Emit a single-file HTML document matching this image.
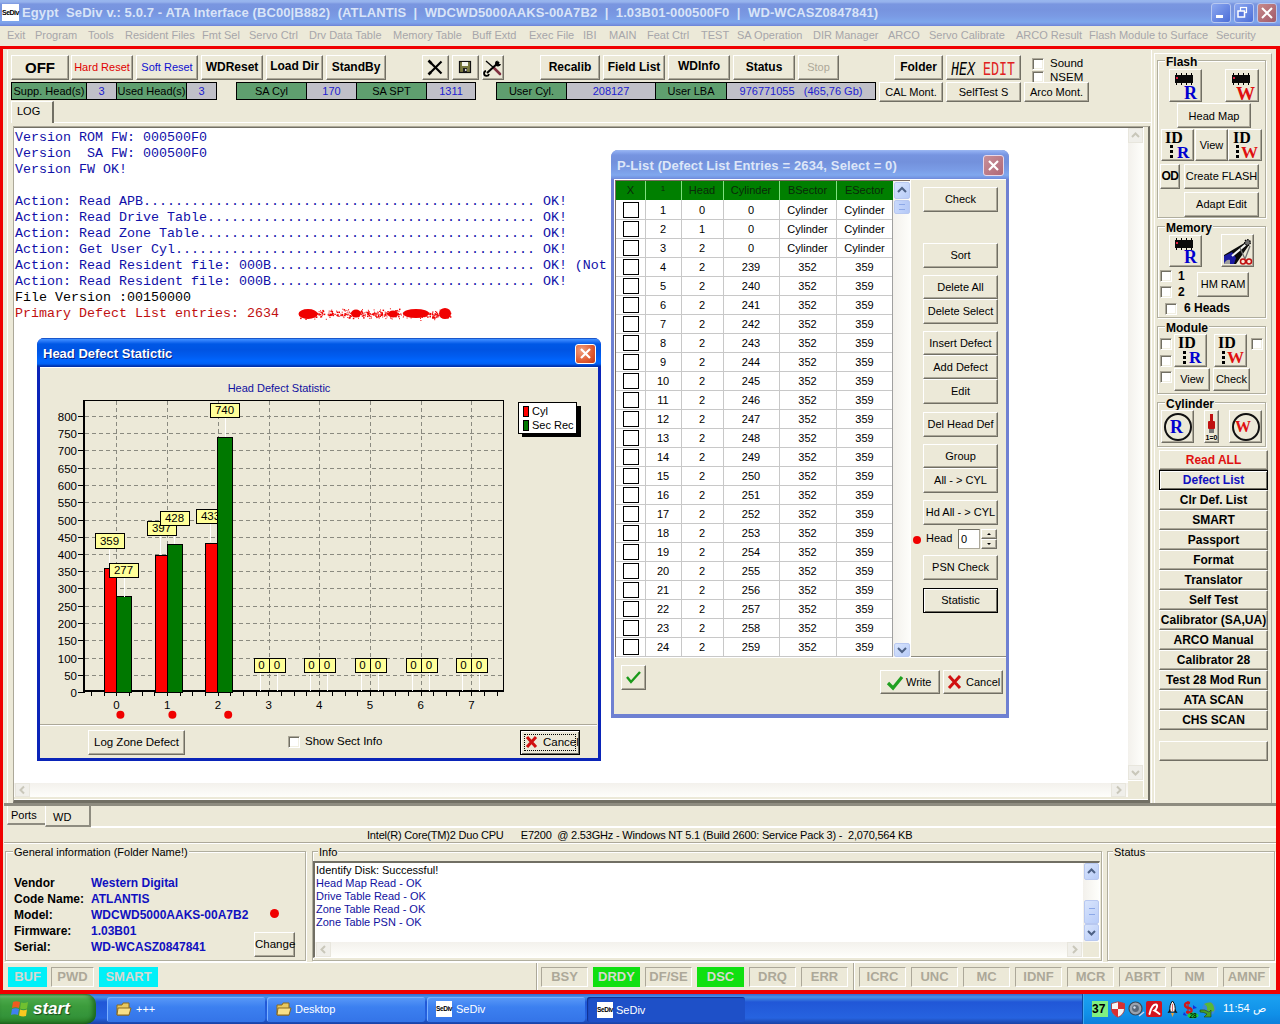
<!DOCTYPE html>
<html><head><meta charset="utf-8">
<style>
*{box-sizing:border-box;margin:0;padding:0}
html,body{width:1280px;height:1024px;overflow:hidden;background:#ECE9D8;font-family:"Liberation Sans",sans-serif;font-size:11px;color:#000}
.a{position:absolute}
.t{position:absolute;white-space:nowrap;line-height:1}
/* title bar */
#title{left:0;top:0;width:1280px;height:26px;background:linear-gradient(#98B6EE 0,#96B2EC 2px,#7A96E0 4px,#7794DF 10px,#7A9AE4 16px,#7EA6EC 22px,#7A98E4 24px,#6A82D6 26px)}
#title .tx{left:22px;top:6px;font-weight:bold;font-size:13px;color:#D8E4F8;letter-spacing:0.1px}
.cap{position:absolute;top:3px;width:20px;height:20px;border:1px solid #B8C8F0;border-radius:3px;background:linear-gradient(135deg,#8CA8F0,#4C6ED8)}
#menu{left:0;top:26px;width:1280px;height:20px;background:#ECE9D8}
#menu span{position:absolute;top:3px;color:#A7A6AA;font-size:11px;white-space:nowrap}
/* XP button */
.btn{position:absolute;background:#ECE9D8;border-style:solid;border-width:1px;border-color:#FFFFFF #716F64 #716F64 #FFFFFF;box-shadow:inset -1px -1px 0 #ACA899;text-align:center;white-space:nowrap}
.btn2{position:absolute;background:#ECE9D8;border-top:1px solid #fff;border-left:1px solid #fff;border-right:1px solid #ACA899;border-bottom:2px solid #ACA899;box-shadow:1px 1px 0 #716F64 inset,0 0 0 0;text-align:center;white-space:nowrap}
.g{position:absolute;background:#5F9F6F;border:1px solid #000;text-align:center;white-space:nowrap;color:#000;font-size:11px}
.v{position:absolute;background:#C0C0C8;border:1px solid #000;text-align:center;white-space:nowrap;color:#2020D0;font-size:11px}
.mono{font-family:"Liberation Mono",monospace;font-size:13.33px}
.chk{position:absolute;width:12px;height:12px;background:#fff;border:1px solid;border-color:#ACA899 #FFFFFF #FFFFFF #ACA899;box-shadow:inset 1px 1px 0 #716F64,inset -1px -1px 0 #F1EFE2}
</style></head><body>
<!-- title bar -->
<div id="title" class="a">
  <div class="a" style="left:2px;top:4px;width:17px;height:17px;background:#fff"></div>
  <div class="t" style="left:2px;top:9px;font-size:7px;font-weight:bold;color:#000;letter-spacing:-0.5px">SeDiv</div>
  <div class="t tx">Egypt&nbsp; SeDiv v.: 5.0.7 - ATA Interface (BC00|B882)&nbsp; (ATLANTIS&nbsp; |&nbsp; WDCWD5000AAKS-00A7B2&nbsp; |&nbsp; 1.03B01-000500F0&nbsp; |&nbsp; WD-WCASZ0847841)</div>
  <div class="cap" style="left:1211px"></div>
  <div class="a" style="left:1216px;top:15px;width:7px;height:3px;background:#fff"></div>
  <div class="cap" style="left:1234px"></div>
  <svg class="a" style="left:1234px;top:3px" width="20" height="20"><rect x="6.5" y="4.5" width="6" height="5" fill="none" stroke="#fff" stroke-width="1.2"/><rect x="4" y="8" width="6.5" height="6" fill="#5A7AE0" stroke="#fff" stroke-width="1.5"/></svg>
  <div class="cap" style="left:1257px;background:linear-gradient(135deg,#C88A8A,#A05A6A)"></div>
  <svg class="a" style="left:1257px;top:3px" width="20" height="20"><path d="M5 5 L15 15 M15 5 L5 15" stroke="#fff" stroke-width="2"/></svg>
</div>
<div id="menu" class="a">
<span style="left:7px">Exit</span><span style="left:35px">Program</span><span style="left:88px">Tools</span><span style="left:125px">Resident Files</span><span style="left:202px">Fmt Sel</span><span style="left:249px">Servo Ctrl</span><span style="left:309px">Drv Data Table</span><span style="left:393px">Memory Table</span><span style="left:472px">Buff Extd</span><span style="left:529px">Exec File</span><span style="left:583px">IBI</span><span style="left:609px">MAIN</span><span style="left:647px">Feat Ctrl</span><span style="left:701px">TEST</span><span style="left:737px">SA Operation</span><span style="left:813px">DIR Manager</span><span style="left:888px">ARCO</span><span style="left:929px">Servo Calibrate</span><span style="left:1016px">ARCO Result</span><span style="left:1089px">Flash Module to Surface</span><span style="left:1216px">Security</span>
</div>
<!-- red frame -->
<div class="a" style="left:0;top:46px;width:1280px;height:3px;background:#F00000"></div>
<div class="a" style="left:0;top:46px;width:3px;height:948px;background:#F00000"></div>
<div class="a" style="left:1276px;top:46px;width:4px;height:948px;background:#F00000"></div>
<div class="a" style="left:0;top:990px;width:1280px;height:4px;background:#F00000"></div>


<!-- main panel highlight -->
<div class="a" style="left:7px;top:50px;width:1px;height:760px;background:#FFFFFF"></div>
<!-- toolbar row 1 -->
<div class="btn" style="left:11px;top:55px;width:58px;height:25px;font-size:15px;font-weight:bold;line-height:23px">OFF</div>
<div class="btn" style="left:71px;top:55px;width:62px;height:25px;color:#E00000;font-size:11px;line-height:23px">Hard Reset</div>
<div class="btn" style="left:136px;top:55px;width:62px;height:25px;color:#1010D0;font-size:11px;line-height:23px">Soft Reset</div>
<div class="btn" style="left:201px;top:55px;width:62px;height:25px;font-size:12px;font-weight:bold;line-height:23px">WDReset</div>
<div class="btn" style="left:266px;top:55px;width:57px;height:25px;font-size:12px;font-weight:bold;line-height:21px">Load Dir</div>
<div class="btn" style="left:326px;top:55px;width:60px;height:25px;font-size:12px;font-weight:bold;line-height:23px">StandBy</div>
<div class="btn" style="left:422px;top:55px;width:27px;height:25px"></div>
<svg class="a" style="left:422px;top:55px" width="27" height="25"><path d="M7.5 6.5 L19.5 18.5" stroke="#000" stroke-width="2.2"/><path d="M19.5 6.5 L7.5 18.5" stroke="#000" stroke-width="2.2"/><path d="M6.5 5.5 L9.5 8.5 M6.5 19.5 L9 17" stroke="#000" stroke-width="2.6"/></svg>
<div class="btn" style="left:452px;top:55px;width:27px;height:25px"></div>
<svg class="a" style="left:452px;top:55px" width="27" height="25"><rect x="7.5" y="6.5" width="11" height="11" fill="#7A7A40" stroke="#111" stroke-width="1.2"/><rect x="10" y="7" width="6" height="4" fill="#F4F4EC"/><rect x="11" y="13" width="4" height="4" fill="#222"/><rect x="13" y="14" width="1.5" height="2" fill="#ddd"/></svg>
<div class="btn" style="left:482px;top:55px;width:22px;height:25px"></div>
<svg class="a" style="left:482px;top:55px" width="22" height="25"><path d="M4 6 L12 13" stroke="#000" stroke-width="1.3"/><path d="M12 13 L18 19" stroke="#803040" stroke-width="2.6" stroke-linecap="round"/><path d="M17 7 L5 18" stroke="#000" stroke-width="2"/><path d="M15.5 5.5 a3 3 0 1 0 3.5 3.5 L17.5 9 L16 7.5Z" fill="#000"/><path d="M4 16 a2.5 2.5 0 1 0 3 3" stroke="#000" stroke-width="1.8" fill="none"/></svg>
<div class="btn" style="left:540px;top:55px;width:60px;height:25px;font-size:12px;font-weight:bold;line-height:23px">Recalib</div>
<div class="btn" style="left:603px;top:55px;width:62px;height:25px;font-size:12px;font-weight:bold;line-height:23px">Field List</div>
<div class="btn" style="left:668px;top:55px;width:62px;height:25px;font-size:12px;font-weight:bold;line-height:21px">WDInfo</div>
<div class="btn" style="left:733px;top:55px;width:62px;height:25px;font-size:12px;font-weight:bold;line-height:23px">Status</div>
<div class="btn" style="left:798px;top:55px;width:41px;height:25px;font-size:11px;color:#ACA899;line-height:23px">Stop</div>
<div class="btn" style="left:894px;top:55px;width:49px;height:25px;font-size:12px;font-weight:bold;line-height:23px">Folder</div>
<div class="btn" style="left:946px;top:55px;width:75px;height:25px"></div>
<div class="t" style="left:951px;top:60px;font-size:13.33px;font-family:'Liberation Mono',monospace;transform:scaleY(1.45);transform-origin:0 0;line-height:1"><span style="font-style:italic">HEX</span> <span style="color:#E02020">EDIT</span></div>
<div class="chk" style="left:1032px;top:58px"></div>
<div class="chk" style="left:1032px;top:71px"></div>
<div class="t" style="left:1050px;top:58px;font-size:11.5px">Sound</div>
<div class="t" style="left:1050px;top:72px;font-size:11.5px">NSEM</div>
<!-- row 2 -->
<div class="g" style="left:11px;top:82px;width:76px;height:18px;line-height:16px">Supp. Head(s)</div>
<div class="v" style="left:86px;top:82px;width:31px;height:18px;line-height:16px">3</div>
<div class="g" style="left:116px;top:82px;width:71px;height:18px;line-height:16px">Used Head(s)</div>
<div class="v" style="left:186px;top:82px;width:31px;height:18px;line-height:16px">3</div>
<div class="g" style="left:236px;top:82px;width:71px;height:18px;line-height:16px">SA Cyl</div>
<div class="v" style="left:306px;top:82px;width:51px;height:18px;line-height:16px">170</div>
<div class="g" style="left:356px;top:82px;width:71px;height:18px;line-height:16px">SA SPT</div>
<div class="v" style="left:426px;top:82px;width:50px;height:18px;line-height:16px">1311</div>
<div class="g" style="left:496px;top:82px;width:71px;height:18px;line-height:16px">User Cyl.</div>
<div class="v" style="left:566px;top:82px;width:90px;height:18px;line-height:16px">208127</div>
<div class="g" style="left:655px;top:82px;width:72px;height:18px;line-height:16px">User LBA</div>
<div class="v" style="left:726px;top:82px;width:150px;height:18px;line-height:16px">976771055&nbsp;&nbsp; (465,76 Gb)</div>
<div class="btn" style="left:879px;top:82px;width:64px;height:20px;font-size:11px;line-height:18px">CAL Mont.</div>
<div class="btn" style="left:946px;top:82px;width:75px;height:20px;font-size:11px;line-height:18px">SelfTest S</div>
<div class="btn" style="left:1024px;top:82px;width:65px;height:20px;font-size:11px;line-height:18px">Arco Mont.</div>
<!-- LOG tab -->
<div class="a" style="left:11px;top:101px;width:43px;height:22px;border-top:1px solid #fff;border-left:1px solid #fff;border-right:2px solid #716F64;background:#ECE9D8"></div>
<div class="t" style="left:17px;top:106px;font-size:11px">LOG</div>
<div class="a" style="left:54px;top:122px;width:1097px;height:1px;background:#fff"></div>


<!-- LOG panel -->
<div class="a" style="left:13px;top:126px;width:1137px;height:677px;border-top:1px solid #ACA899;border-left:1px solid #ACA899;border-right:2px solid #716F64;border-bottom:3px solid #716F64;background:#fff"></div>
<div class="a" style="left:14px;top:127px;width:1134px;height:1px;background:#716F64"></div>
<div class="a" style="left:1143px;top:127px;width:5px;height:673px;background:#ECE9D8;border-left:1px solid #fff"></div>
<div class="a" style="left:14px;top:797px;width:1134px;height:3px;background:#ECE9D8;border-bottom:1px solid #fff"></div>
<!-- v scroll -->
<div class="a" style="left:1128px;top:128px;width:15px;height:652px;background:linear-gradient(90deg,#F3F1EC,#FEFEFB)"></div>
<div class="a" style="left:1128px;top:128px;width:15px;height:15px;background:#F0EFEA;border:1px solid #E8E6DD"></div>
<div class="a" style="left:1128px;top:765px;width:15px;height:15px;background:#F0EFEA;border:1px solid #E8E6DD"></div>
<svg class="a" style="left:1128px;top:128px" width="15" height="15"><path d="M4 9 L7.5 5.5 L11 9" stroke="#C9C7BA" stroke-width="2" fill="none"/></svg>
<svg class="a" style="left:1128px;top:765px" width="15" height="15"><path d="M4 6 L7.5 9.5 L11 6" stroke="#C9C7BA" stroke-width="2" fill="none"/></svg>
<!-- h scroll -->
<div class="a" style="left:14px;top:783px;width:1114px;height:14px;background:linear-gradient(#F3F1EC,#FEFEFB)"></div>
<div class="a" style="left:15px;top:783px;width:15px;height:14px;background:#F0EFEA;border:1px solid #E8E6DD"></div>
<div class="a" style="left:1111px;top:783px;width:15px;height:14px;background:#F0EFEA;border:1px solid #E8E6DD"></div>
<svg class="a" style="left:15px;top:783px" width="15" height="14"><path d="M9 3.5 L5.5 7 L9 10.5" stroke="#C9C7BA" stroke-width="2" fill="none"/></svg>
<svg class="a" style="left:1111px;top:783px" width="15" height="14"><path d="M6 3.5 L9.5 7 L6 10.5" stroke="#C9C7BA" stroke-width="2" fill="none"/></svg>
<div class="a" style="left:1128px;top:781px;width:15px;height:16px;background:#ECE9D8"></div>
<div class="a mono" style="left:15px;top:130px;line-height:16px;white-space:nowrap"><div style="color:#1010A8;height:16px">Version&nbsp;ROM&nbsp;FW:&nbsp;000500F0</div><div style="color:#1010A8;height:16px">Version&nbsp;&nbsp;SA&nbsp;FW:&nbsp;000500F0</div><div style="color:#1010A8;height:16px">Version&nbsp;FW&nbsp;OK!</div><div style="color:#1010A8;height:16px">&nbsp;</div><div style="color:#1010A8;height:16px">Action:&nbsp;Read&nbsp;APB.................................................&nbsp;OK!</div><div style="color:#1010A8;height:16px">Action:&nbsp;Read&nbsp;Drive&nbsp;Table.........................................&nbsp;OK!</div><div style="color:#1010A8;height:16px">Action:&nbsp;Read&nbsp;Zone&nbsp;Table..........................................&nbsp;OK!</div><div style="color:#1010A8;height:16px">Action:&nbsp;Get&nbsp;User&nbsp;Cyl.............................................&nbsp;OK!</div><div style="color:#1010A8;height:16px">Action:&nbsp;Read&nbsp;Resident&nbsp;file:&nbsp;000B.................................&nbsp;OK!&nbsp;(Not</div><div style="color:#1010A8;height:16px">Action:&nbsp;Read&nbsp;Resident&nbsp;file:&nbsp;000B.................................&nbsp;OK!</div><div style="color:#000000;height:16px">File&nbsp;Version&nbsp;:00150000</div><div style="color:#C01010;height:16px">Primary&nbsp;Defect&nbsp;List&nbsp;entries:&nbsp;2634</div></div>
<svg class="a" style="left:298px;top:304px" width="160" height="20"><ellipse cx="10" cy="10" rx="9.5" ry="5" fill="#F00000"/><ellipse cx="58" cy="9.5" rx="5" ry="4" fill="#F00000"/><ellipse cx="95" cy="10" rx="5" ry="3.5" fill="#F00000"/><ellipse cx="118" cy="9.5" rx="13" ry="4.5" fill="#F00000"/><ellipse cx="147" cy="9.5" rx="6" ry="5.5" fill="#F00000"/><rect x="69.9" y="5.8" width="1" height="1" fill="#F00000"/><rect x="69.8" y="8.3" width="1.5" height="1.5" fill="#F00000"/><rect x="30.5" y="10.8" width="1.5" height="1.5" fill="#F00000"/><rect x="120.9" y="7.9" width="1" height="1" fill="#F00000"/><rect x="69.0" y="11.6" width="1.5" height="1.5" fill="#F00000"/><rect x="97.2" y="11.9" width="1.5" height="1.5" fill="#F00000"/><rect x="149.3" y="12.8" width="1.5" height="1.5" fill="#F00000"/><rect x="99.5" y="9.4" width="1.5" height="1.5" fill="#F00000"/><rect x="4.3" y="9.3" width="1" height="1" fill="#F00000"/><rect x="133.9" y="9.9" width="1.5" height="1.5" fill="#F00000"/><rect x="6.5" y="7.9" width="1" height="1" fill="#F00000"/><rect x="79.9" y="10.5" width="1.5" height="1.5" fill="#F00000"/><rect x="46.1" y="10.8" width="1.5" height="1.5" fill="#F00000"/><rect x="43.7" y="10.0" width="1.5" height="1.5" fill="#F00000"/><rect x="151.4" y="11.7" width="1" height="1" fill="#F00000"/><rect x="115.7" y="7.4" width="1.5" height="1.5" fill="#F00000"/><rect x="45.4" y="13.1" width="1" height="1" fill="#F00000"/><rect x="18.2" y="11.5" width="1" height="1" fill="#F00000"/><rect x="60.0" y="13.7" width="1" height="1" fill="#F00000"/><rect x="34.0" y="9.0" width="1" height="1" fill="#F00000"/><rect x="72.5" y="12.0" width="1" height="1" fill="#F00000"/><rect x="86.9" y="9.8" width="1" height="1" fill="#F00000"/><rect x="118.8" y="9.9" width="1" height="1" fill="#F00000"/><rect x="4.3" y="10.8" width="1" height="1" fill="#F00000"/><rect x="115.7" y="11.1" width="1" height="1" fill="#F00000"/><rect x="3.6" y="11.0" width="1" height="1" fill="#F00000"/><rect x="121.6" y="11.1" width="1" height="1" fill="#F00000"/><rect x="78.3" y="12.3" width="1.5" height="1.5" fill="#F00000"/><rect x="117.4" y="8.3" width="1" height="1" fill="#F00000"/><rect x="65.1" y="11.0" width="1" height="1" fill="#F00000"/><rect x="2.1" y="13.6" width="1.5" height="1.5" fill="#F00000"/><rect x="47.6" y="5.9" width="1" height="1" fill="#F00000"/><rect x="33.6" y="6.9" width="1.5" height="1.5" fill="#F00000"/><rect x="88.5" y="12.4" width="1" height="1" fill="#F00000"/><rect x="150.4" y="10.4" width="1.5" height="1.5" fill="#F00000"/><rect x="51.3" y="11.5" width="1" height="1" fill="#F00000"/><rect x="59.9" y="11.2" width="1.5" height="1.5" fill="#F00000"/><rect x="38.5" y="10.6" width="1.5" height="1.5" fill="#F00000"/><rect x="57.3" y="9.2" width="1.5" height="1.5" fill="#F00000"/><rect x="74.6" y="9.3" width="1.5" height="1.5" fill="#F00000"/><rect x="22.4" y="7.9" width="1" height="1" fill="#F00000"/><rect x="138.3" y="11.8" width="1.5" height="1.5" fill="#F00000"/><rect x="39.4" y="11.2" width="1.5" height="1.5" fill="#F00000"/><rect x="31.5" y="13.0" width="1" height="1" fill="#F00000"/><rect x="134.3" y="8.3" width="1" height="1" fill="#F00000"/><rect x="18.4" y="8.7" width="1.5" height="1.5" fill="#F00000"/><rect x="146.4" y="10.2" width="1" height="1" fill="#F00000"/><rect x="65.1" y="13.1" width="1.5" height="1.5" fill="#F00000"/><rect x="75.6" y="5.4" width="1" height="1" fill="#F00000"/><rect x="21.0" y="9.4" width="1" height="1" fill="#F00000"/><rect x="85.9" y="11.7" width="1" height="1" fill="#F00000"/><rect x="33.9" y="7.8" width="1" height="1" fill="#F00000"/><rect x="114.3" y="11.9" width="1" height="1" fill="#F00000"/><rect x="11.1" y="10.9" width="1" height="1" fill="#F00000"/><rect x="44.3" y="4.7" width="1" height="1" fill="#F00000"/><rect x="56.3" y="9.0" width="1" height="1" fill="#F00000"/><rect x="149.1" y="8.3" width="1.5" height="1.5" fill="#F00000"/><rect x="144.0" y="7.4" width="1.5" height="1.5" fill="#F00000"/><rect x="7.3" y="14.4" width="1.5" height="1.5" fill="#F00000"/><rect x="48.8" y="10.5" width="1" height="1" fill="#F00000"/><rect x="5.2" y="8.5" width="1.5" height="1.5" fill="#F00000"/><rect x="48.7" y="8.3" width="1" height="1" fill="#F00000"/><rect x="151.9" y="12.2" width="1.5" height="1.5" fill="#F00000"/><rect x="8.7" y="11.1" width="1.5" height="1.5" fill="#F00000"/><rect x="112.6" y="13.5" width="1" height="1" fill="#F00000"/><rect x="54.8" y="13.7" width="1.5" height="1.5" fill="#F00000"/><rect x="73.0" y="13.5" width="1" height="1" fill="#F00000"/><rect x="131.5" y="11.9" width="1.5" height="1.5" fill="#F00000"/><rect x="4.2" y="9.0" width="1" height="1" fill="#F00000"/><rect x="93.3" y="8.3" width="1" height="1" fill="#F00000"/><rect x="15.6" y="11.2" width="1" height="1" fill="#F00000"/><rect x="111.2" y="11.0" width="1" height="1" fill="#F00000"/><rect x="142.1" y="9.2" width="1" height="1" fill="#F00000"/><rect x="127.8" y="7.9" width="1" height="1" fill="#F00000"/><rect x="79.8" y="8.3" width="1" height="1" fill="#F00000"/><rect x="74.1" y="9.8" width="1" height="1" fill="#F00000"/><rect x="145.6" y="12.6" width="1.5" height="1.5" fill="#F00000"/><rect x="140.1" y="12.3" width="1" height="1" fill="#F00000"/><rect x="136.5" y="9.2" width="1.5" height="1.5" fill="#F00000"/><rect x="32.4" y="10.8" width="1" height="1" fill="#F00000"/><rect x="115.1" y="7.5" width="1" height="1" fill="#F00000"/><rect x="135.8" y="13.9" width="1" height="1" fill="#F00000"/><rect x="62.7" y="10.0" width="1" height="1" fill="#F00000"/><rect x="134.0" y="12.8" width="1" height="1" fill="#F00000"/><rect x="34.9" y="11.2" width="1" height="1" fill="#F00000"/><rect x="76.5" y="9.3" width="1" height="1" fill="#F00000"/><rect x="108.7" y="11.5" width="1" height="1" fill="#F00000"/><rect x="18.9" y="9.5" width="1" height="1" fill="#F00000"/><rect x="43.3" y="10.5" width="1.5" height="1.5" fill="#F00000"/><rect x="80.0" y="12.0" width="1.5" height="1.5" fill="#F00000"/><rect x="49.3" y="13.0" width="1" height="1" fill="#F00000"/><rect x="50.1" y="5.2" width="1" height="1" fill="#F00000"/><rect x="43.7" y="7.7" width="1" height="1" fill="#F00000"/><rect x="87.6" y="8.1" width="1" height="1" fill="#F00000"/><rect x="99.4" y="7.4" width="1" height="1" fill="#F00000"/><rect x="70.2" y="8.9" width="1" height="1" fill="#F00000"/><rect x="117.4" y="9.6" width="1" height="1" fill="#F00000"/><rect x="149.6" y="13.5" width="1" height="1" fill="#F00000"/><rect x="69.0" y="8.0" width="1" height="1" fill="#F00000"/><rect x="145.8" y="7.9" width="1.5" height="1.5" fill="#F00000"/><rect x="31.7" y="10.7" width="1.5" height="1.5" fill="#F00000"/><rect x="3.6" y="8.6" width="1" height="1" fill="#F00000"/><rect x="82.2" y="11.4" width="1" height="1" fill="#F00000"/><rect x="83.0" y="10.3" width="1.5" height="1.5" fill="#F00000"/><rect x="77.1" y="11.2" width="1.5" height="1.5" fill="#F00000"/><rect x="137.9" y="10.0" width="1" height="1" fill="#F00000"/><rect x="63.6" y="11.5" width="1" height="1" fill="#F00000"/><rect x="70.0" y="8.8" width="1.5" height="1.5" fill="#F00000"/><rect x="135.1" y="12.5" width="1.5" height="1.5" fill="#F00000"/><rect x="133.9" y="10.1" width="1" height="1" fill="#F00000"/><rect x="71.6" y="9.2" width="1.5" height="1.5" fill="#F00000"/><rect x="131.9" y="8.9" width="1.5" height="1.5" fill="#F00000"/><rect x="140.6" y="11.1" width="1" height="1" fill="#F00000"/><rect x="149.1" y="11.0" width="1" height="1" fill="#F00000"/><rect x="82.5" y="10.4" width="1.5" height="1.5" fill="#F00000"/><rect x="130.4" y="8.3" width="1" height="1" fill="#F00000"/><rect x="77.7" y="11.8" width="1" height="1" fill="#F00000"/><rect x="117.2" y="10.4" width="1" height="1" fill="#F00000"/><rect x="140.0" y="10.8" width="1" height="1" fill="#F00000"/><rect x="122.0" y="13.9" width="1" height="1" fill="#F00000"/><rect x="82.0" y="8.3" width="1" height="1" fill="#F00000"/><rect x="24.3" y="5.9" width="1.5" height="1.5" fill="#F00000"/><rect x="137.1" y="7.0" width="1" height="1" fill="#F00000"/><rect x="143.9" y="9.7" width="1" height="1" fill="#F00000"/><rect x="88.8" y="8.7" width="1" height="1" fill="#F00000"/><rect x="81.0" y="6.9" width="1" height="1" fill="#F00000"/><rect x="126.7" y="8.9" width="1.5" height="1.5" fill="#F00000"/><rect x="128.5" y="9.5" width="1.5" height="1.5" fill="#F00000"/><rect x="40.5" y="7.6" width="1.5" height="1.5" fill="#F00000"/><rect x="33.2" y="5.6" width="1" height="1" fill="#F00000"/><rect x="147.3" y="7.4" width="1" height="1" fill="#F00000"/><rect x="63.7" y="9.6" width="1" height="1" fill="#F00000"/><rect x="77.5" y="9.6" width="1" height="1" fill="#F00000"/><rect x="79.4" y="9.7" width="1" height="1" fill="#F00000"/><rect x="83.6" y="11.0" width="1" height="1" fill="#F00000"/><rect x="105.6" y="9.9" width="1" height="1" fill="#F00000"/><rect x="141.6" y="5.6" width="1" height="1" fill="#F00000"/><rect x="42.4" y="11.1" width="1" height="1" fill="#F00000"/><rect x="76.0" y="7.7" width="1" height="1" fill="#F00000"/><rect x="80.7" y="13.6" width="1" height="1" fill="#F00000"/><rect x="30.7" y="6.6" width="1" height="1" fill="#F00000"/><rect x="107.3" y="6.9" width="1" height="1" fill="#F00000"/><rect x="7.3" y="10.2" width="1" height="1" fill="#F00000"/><rect x="50.3" y="10.3" width="1" height="1" fill="#F00000"/><rect x="38.7" y="7.6" width="1.5" height="1.5" fill="#F00000"/><rect x="20.4" y="10.0" width="1.5" height="1.5" fill="#F00000"/><rect x="95.5" y="9.4" width="1" height="1" fill="#F00000"/><rect x="5.5" y="7.0" width="1.5" height="1.5" fill="#F00000"/><rect x="64.0" y="8.8" width="1" height="1" fill="#F00000"/><rect x="131.6" y="9.8" width="1.5" height="1.5" fill="#F00000"/><rect x="97.8" y="6.2" width="1.5" height="1.5" fill="#F00000"/><rect x="90.0" y="9.3" width="1" height="1" fill="#F00000"/><rect x="36.9" y="9.8" width="1" height="1" fill="#F00000"/><rect x="49.4" y="6.4" width="1" height="1" fill="#F00000"/><rect x="135.6" y="11.2" width="1" height="1" fill="#F00000"/><rect x="135.1" y="13.3" width="1" height="1" fill="#F00000"/><rect x="135.3" y="10.6" width="1" height="1" fill="#F00000"/><rect x="16.6" y="10.6" width="1" height="1" fill="#F00000"/><rect x="83.5" y="9.6" width="1.5" height="1.5" fill="#F00000"/><rect x="104.8" y="8.7" width="1" height="1" fill="#F00000"/><rect x="16.4" y="8.3" width="1" height="1" fill="#F00000"/><rect x="19.3" y="9.2" width="1.5" height="1.5" fill="#F00000"/><rect x="97.2" y="6.0" width="1" height="1" fill="#F00000"/><rect x="122.4" y="16.0" width="1" height="1" fill="#F00000"/><rect x="17.9" y="12.5" width="1.5" height="1.5" fill="#F00000"/><rect x="137.8" y="10.6" width="1" height="1" fill="#F00000"/><rect x="24.0" y="10.5" width="1" height="1" fill="#F00000"/><rect x="150.5" y="11.2" width="1.5" height="1.5" fill="#F00000"/><rect x="16.3" y="14.6" width="1" height="1" fill="#F00000"/><rect x="13.6" y="11.9" width="1" height="1" fill="#F00000"/><rect x="51.0" y="7.6" width="1" height="1" fill="#F00000"/><rect x="33.5" y="10.5" width="1" height="1" fill="#F00000"/><rect x="4.0" y="8.8" width="1" height="1" fill="#F00000"/><rect x="63.2" y="6.3" width="1" height="1" fill="#F00000"/><rect x="112.9" y="8.9" width="1" height="1" fill="#F00000"/><rect x="16.2" y="10.7" width="1" height="1" fill="#F00000"/><rect x="50.6" y="13.3" width="1.5" height="1.5" fill="#F00000"/><rect x="142.9" y="12.0" width="1.5" height="1.5" fill="#F00000"/><rect x="91.9" y="4.3" width="1" height="1" fill="#F00000"/><rect x="43.9" y="9.8" width="1" height="1" fill="#F00000"/><rect x="113.7" y="10.6" width="1" height="1" fill="#F00000"/><rect x="22.0" y="6.4" width="1" height="1" fill="#F00000"/><rect x="134.0" y="8.8" width="1" height="1" fill="#F00000"/><rect x="62.9" y="6.8" width="1.5" height="1.5" fill="#F00000"/><rect x="29.7" y="10.5" width="1" height="1" fill="#F00000"/><rect x="3.6" y="8.4" width="1" height="1" fill="#F00000"/><rect x="150.6" y="10.5" width="1" height="1" fill="#F00000"/><rect x="143.7" y="9.6" width="1.5" height="1.5" fill="#F00000"/><rect x="46.8" y="10.4" width="1" height="1" fill="#F00000"/><rect x="82.0" y="12.0" width="1" height="1" fill="#F00000"/><rect x="79.2" y="8.6" width="1" height="1" fill="#F00000"/><rect x="116.3" y="10.0" width="1.5" height="1.5" fill="#F00000"/><rect x="5.4" y="7.5" width="1" height="1" fill="#F00000"/><rect x="68.5" y="7.8" width="1.5" height="1.5" fill="#F00000"/><rect x="9.6" y="10.7" width="1" height="1" fill="#F00000"/><rect x="40.8" y="11.8" width="1" height="1" fill="#F00000"/><rect x="137.8" y="7.7" width="1.5" height="1.5" fill="#F00000"/><rect x="87.2" y="9.3" width="1" height="1" fill="#F00000"/><rect x="97.7" y="10.3" width="1.5" height="1.5" fill="#F00000"/><rect x="102.3" y="9.3" width="1" height="1" fill="#F00000"/><rect x="60.0" y="11.8" width="1" height="1" fill="#F00000"/><rect x="130.4" y="9.3" width="1.5" height="1.5" fill="#F00000"/><rect x="93.7" y="14.5" width="1" height="1" fill="#F00000"/><rect x="44.7" y="11.7" width="1" height="1" fill="#F00000"/><rect x="91.7" y="8.9" width="1.5" height="1.5" fill="#F00000"/><rect x="42.5" y="11.2" width="1" height="1" fill="#F00000"/><rect x="101.5" y="10.0" width="1" height="1" fill="#F00000"/><rect x="89.9" y="9.5" width="1.5" height="1.5" fill="#F00000"/><rect x="25.5" y="10.1" width="1" height="1" fill="#F00000"/><rect x="114.3" y="8.0" width="1" height="1" fill="#F00000"/><rect x="89.3" y="9.7" width="1" height="1" fill="#F00000"/><rect x="66.4" y="8.3" width="1" height="1" fill="#F00000"/><rect x="39.6" y="10.0" width="1" height="1" fill="#F00000"/><rect x="142.6" y="9.4" width="1.5" height="1.5" fill="#F00000"/><rect x="138.4" y="13.1" width="1" height="1" fill="#F00000"/><rect x="92.5" y="14.0" width="1" height="1" fill="#F00000"/><rect x="9.6" y="9.1" width="1" height="1" fill="#F00000"/><rect x="55.5" y="10.5" width="1" height="1" fill="#F00000"/><rect x="20.6" y="7.2" width="1" height="1" fill="#F00000"/><rect x="92.2" y="11.0" width="1.5" height="1.5" fill="#F00000"/><rect x="89.3" y="7.0" width="1.5" height="1.5" fill="#F00000"/><rect x="124.3" y="11.7" width="1" height="1" fill="#F00000"/><rect x="144.9" y="9.9" width="1" height="1" fill="#F00000"/><rect x="77.4" y="8.5" width="1" height="1" fill="#F00000"/><rect x="119.6" y="8.7" width="1" height="1" fill="#F00000"/><rect x="93.5" y="8.7" width="1.5" height="1.5" fill="#F00000"/><rect x="86.7" y="7.6" width="1" height="1" fill="#F00000"/><rect x="30.5" y="8.5" width="1" height="1" fill="#F00000"/><rect x="77.3" y="9.2" width="1.5" height="1.5" fill="#F00000"/><rect x="7.9" y="8.9" width="1" height="1" fill="#F00000"/><rect x="3.4" y="10.0" width="1" height="1" fill="#F00000"/><rect x="17.4" y="10.5" width="1.5" height="1.5" fill="#F00000"/><rect x="43.7" y="10.2" width="1" height="1" fill="#F00000"/><rect x="84.6" y="5.6" width="1.5" height="1.5" fill="#F00000"/><rect x="149.2" y="8.1" width="1" height="1" fill="#F00000"/><rect x="53.6" y="10.2" width="1.5" height="1.5" fill="#F00000"/><rect x="22.0" y="12.5" width="1" height="1" fill="#F00000"/><rect x="123.4" y="7.4" width="1.5" height="1.5" fill="#F00000"/><rect x="127.7" y="10.3" width="1.5" height="1.5" fill="#F00000"/><rect x="40.7" y="7.8" width="1" height="1" fill="#F00000"/><rect x="57.3" y="6.6" width="1" height="1" fill="#F00000"/><rect x="45.6" y="5.1" width="1.5" height="1.5" fill="#F00000"/><rect x="125.9" y="11.2" width="1.5" height="1.5" fill="#F00000"/><rect x="16.6" y="12.7" width="1" height="1" fill="#F00000"/><rect x="13.8" y="12.2" width="1" height="1" fill="#F00000"/><rect x="124.3" y="11.3" width="1" height="1" fill="#F00000"/><rect x="46.8" y="10.1" width="1" height="1" fill="#F00000"/><rect x="138.6" y="9.2" width="1.5" height="1.5" fill="#F00000"/><rect x="14.3" y="8.9" width="1.5" height="1.5" fill="#F00000"/><rect x="51.2" y="13.0" width="1" height="1" fill="#F00000"/><rect x="34.8" y="9.0" width="1" height="1" fill="#F00000"/><rect x="50.4" y="8.5" width="1" height="1" fill="#F00000"/><rect x="87.4" y="14.1" width="1" height="1" fill="#F00000"/><rect x="67.7" y="7.7" width="1" height="1" fill="#F00000"/><rect x="70.7" y="10.9" width="1.5" height="1.5" fill="#F00000"/><rect x="136.2" y="15.2" width="1" height="1" fill="#F00000"/><rect x="14.6" y="10.2" width="1.5" height="1.5" fill="#F00000"/><rect x="61.3" y="9.6" width="1" height="1" fill="#F00000"/><rect x="121.4" y="9.9" width="1" height="1" fill="#F00000"/><rect x="83.1" y="8.1" width="1.5" height="1.5" fill="#F00000"/><rect x="86.4" y="11.5" width="1" height="1" fill="#F00000"/><rect x="123.8" y="13.0" width="1" height="1" fill="#F00000"/><rect x="79.3" y="7.5" width="1" height="1" fill="#F00000"/><rect x="99.7" y="9.3" width="1" height="1" fill="#F00000"/><rect x="11.6" y="6.6" width="1" height="1" fill="#F00000"/><rect x="52.2" y="9.0" width="1" height="1" fill="#F00000"/><rect x="112.6" y="10.7" width="1.5" height="1.5" fill="#F00000"/><rect x="100.0" y="9.5" width="1" height="1" fill="#F00000"/><rect x="113.9" y="9.1" width="1" height="1" fill="#F00000"/><rect x="75.4" y="8.8" width="1.5" height="1.5" fill="#F00000"/><rect x="52.7" y="8.2" width="1" height="1" fill="#F00000"/><rect x="102.9" y="10.5" width="1" height="1" fill="#F00000"/><rect x="75.2" y="10.3" width="1.5" height="1.5" fill="#F00000"/><rect x="139.2" y="9.3" width="1" height="1" fill="#F00000"/><rect x="115.6" y="11.8" width="1" height="1" fill="#F00000"/><rect x="122.9" y="9.8" width="1" height="1" fill="#F00000"/><rect x="135.3" y="12.8" width="1.5" height="1.5" fill="#F00000"/><rect x="56.3" y="9.3" width="1" height="1" fill="#F00000"/><rect x="122.3" y="8.2" width="1" height="1" fill="#F00000"/><rect x="38.9" y="11.0" width="1" height="1" fill="#F00000"/><rect x="150.7" y="9.1" width="1" height="1" fill="#F00000"/><rect x="60.4" y="10.9" width="1.5" height="1.5" fill="#F00000"/><rect x="45.8" y="10.7" width="1" height="1" fill="#F00000"/><rect x="111.6" y="9.9" width="1" height="1" fill="#F00000"/><rect x="99.2" y="10.2" width="1" height="1" fill="#F00000"/><rect x="115.0" y="8.8" width="1" height="1" fill="#F00000"/><rect x="89.6" y="10.5" width="1" height="1" fill="#F00000"/><rect x="31.6" y="9.7" width="1" height="1" fill="#F00000"/><rect x="34.6" y="10.3" width="1.5" height="1.5" fill="#F00000"/><rect x="78.3" y="13.2" width="1" height="1" fill="#F00000"/><rect x="29.7" y="9.8" width="1" height="1" fill="#F00000"/><rect x="96.0" y="11.2" width="1.5" height="1.5" fill="#F00000"/><rect x="73.9" y="9.7" width="1" height="1" fill="#F00000"/><rect x="101.0" y="14.2" width="1" height="1" fill="#F00000"/><rect x="74.4" y="10.1" width="1" height="1" fill="#F00000"/><rect x="122.2" y="10.6" width="1" height="1" fill="#F00000"/><rect x="148.4" y="11.0" width="1" height="1" fill="#F00000"/><rect x="100.6" y="6.7" width="1" height="1" fill="#F00000"/><rect x="135.8" y="13.1" width="1" height="1" fill="#F00000"/><rect x="121.5" y="6.9" width="1.5" height="1.5" fill="#F00000"/><rect x="65.2" y="11.5" width="1" height="1" fill="#F00000"/><rect x="23.7" y="8.5" width="1.5" height="1.5" fill="#F00000"/><rect x="21.7" y="9.9" width="1.5" height="1.5" fill="#F00000"/><rect x="82.2" y="7.2" width="1" height="1" fill="#F00000"/><rect x="87.8" y="10.6" width="1" height="1" fill="#F00000"/><rect x="125.3" y="11.2" width="1" height="1" fill="#F00000"/><rect x="54.8" y="8.2" width="1" height="1" fill="#F00000"/><rect x="106.1" y="8.4" width="1" height="1" fill="#F00000"/><rect x="145.3" y="6.6" width="1" height="1" fill="#F00000"/><rect x="4.9" y="8.0" width="1" height="1" fill="#F00000"/><rect x="64.5" y="10.8" width="1" height="1" fill="#F00000"/><rect x="33.3" y="9.6" width="1.5" height="1.5" fill="#F00000"/><rect x="64.0" y="5.2" width="1" height="1" fill="#F00000"/><rect x="49.4" y="10.2" width="1" height="1" fill="#F00000"/><rect x="13.4" y="9.2" width="1.5" height="1.5" fill="#F00000"/><rect x="12.1" y="12.1" width="1" height="1" fill="#F00000"/><rect x="105.1" y="11.6" width="1" height="1" fill="#F00000"/><rect x="114.0" y="11.2" width="1" height="1" fill="#F00000"/><rect x="100.1" y="11.9" width="1.5" height="1.5" fill="#F00000"/><rect x="73.3" y="10.2" width="1" height="1" fill="#F00000"/><rect x="86.6" y="9.7" width="1.5" height="1.5" fill="#F00000"/><rect x="33.0" y="10.1" width="1.5" height="1.5" fill="#F00000"/><rect x="24.8" y="6.7" width="1.5" height="1.5" fill="#F00000"/><rect x="46.7" y="6.6" width="1" height="1" fill="#F00000"/><rect x="115.2" y="9.2" width="1" height="1" fill="#F00000"/><rect x="32.0" y="9.7" width="1.5" height="1.5" fill="#F00000"/><rect x="18.4" y="9.4" width="1" height="1" fill="#F00000"/><rect x="110.6" y="11.5" width="1" height="1" fill="#F00000"/><rect x="69.0" y="9.3" width="1.5" height="1.5" fill="#F00000"/><rect x="16.2" y="10.6" width="1.5" height="1.5" fill="#F00000"/><rect x="96.6" y="10.6" width="1" height="1" fill="#F00000"/><rect x="127.5" y="11.2" width="1.5" height="1.5" fill="#F00000"/><rect x="107.6" y="10.4" width="1" height="1" fill="#F00000"/><rect x="67.1" y="10.3" width="1" height="1" fill="#F00000"/><rect x="53.2" y="12.0" width="1" height="1" fill="#F00000"/><rect x="99.1" y="5.9" width="1" height="1" fill="#F00000"/><rect x="125.2" y="8.6" width="1" height="1" fill="#F00000"/><rect x="95.5" y="11.2" width="1.5" height="1.5" fill="#F00000"/><rect x="62.1" y="8.2" width="1" height="1" fill="#F00000"/><rect x="101.0" y="4.6" width="1.5" height="1.5" fill="#F00000"/><rect x="81.5" y="9.9" width="1" height="1" fill="#F00000"/><rect x="99.6" y="11.3" width="1" height="1" fill="#F00000"/><rect x="85.6" y="10.5" width="1" height="1" fill="#F00000"/><rect x="125.8" y="11.7" width="1.5" height="1.5" fill="#F00000"/><rect x="109.0" y="9.9" width="1" height="1" fill="#F00000"/><rect x="84.2" y="12.5" width="1" height="1" fill="#F00000"/><rect x="93.8" y="7.4" width="1" height="1" fill="#F00000"/><rect x="150.0" y="9.8" width="1.5" height="1.5" fill="#F00000"/><rect x="151.8" y="8.7" width="1.5" height="1.5" fill="#F00000"/><rect x="143.7" y="5.5" width="1.5" height="1.5" fill="#F00000"/><rect x="100.9" y="10.2" width="1" height="1" fill="#F00000"/><rect x="88.5" y="8.9" width="1.5" height="1.5" fill="#F00000"/><rect x="52.0" y="13.4" width="1" height="1" fill="#F00000"/><rect x="71.5" y="12.2" width="1" height="1" fill="#F00000"/><rect x="69.8" y="9.8" width="1.5" height="1.5" fill="#F00000"/><rect x="83.5" y="8.5" width="1.5" height="1.5" fill="#F00000"/><rect x="11.5" y="11.0" width="1.5" height="1.5" fill="#F00000"/><rect x="150.8" y="9.4" width="1" height="1" fill="#F00000"/><rect x="92.2" y="12.7" width="1" height="1" fill="#F00000"/><rect x="104.8" y="12.6" width="1" height="1" fill="#F00000"/><rect x="38.1" y="6.6" width="1" height="1" fill="#F00000"/><rect x="91.6" y="8.3" width="1" height="1" fill="#F00000"/><rect x="70.2" y="7.1" width="1.5" height="1.5" fill="#F00000"/><rect x="22.7" y="12.0" width="1.5" height="1.5" fill="#F00000"/><rect x="129.1" y="12.3" width="1.5" height="1.5" fill="#F00000"/><rect x="122.6" y="8.5" width="1" height="1" fill="#F00000"/><rect x="25.8" y="9.6" width="1.5" height="1.5" fill="#F00000"/><rect x="60.0" y="10.3" width="1.5" height="1.5" fill="#F00000"/><rect x="62.9" y="9.5" width="1" height="1" fill="#F00000"/><rect x="87.2" y="10.9" width="1" height="1" fill="#F00000"/><rect x="10.0" y="10.7" width="1" height="1" fill="#F00000"/><rect x="62.5" y="6.9" width="1" height="1" fill="#F00000"/><rect x="92.0" y="8.0" width="1.5" height="1.5" fill="#F00000"/><rect x="139.0" y="10.4" width="1.5" height="1.5" fill="#F00000"/><rect x="115.7" y="10.0" width="1" height="1" fill="#F00000"/><rect x="127.7" y="7.7" width="1.5" height="1.5" fill="#F00000"/><rect x="63.4" y="7.6" width="1.5" height="1.5" fill="#F00000"/><rect x="51.6" y="11.0" width="1.5" height="1.5" fill="#F00000"/><rect x="66.8" y="11.5" width="1" height="1" fill="#F00000"/><rect x="46.4" y="9.0" width="1.5" height="1.5" fill="#F00000"/><rect x="137.0" y="9.7" width="1" height="1" fill="#F00000"/><rect x="134.4" y="7.3" width="1" height="1" fill="#F00000"/><rect x="38.7" y="10.8" width="1" height="1" fill="#F00000"/><rect x="147.9" y="8.8" width="1" height="1" fill="#F00000"/><rect x="106.2" y="8.5" width="1" height="1" fill="#F00000"/><rect x="100.5" y="9.8" width="1" height="1" fill="#F00000"/><rect x="134.0" y="13.2" width="1.5" height="1.5" fill="#F00000"/><rect x="57.3" y="10.0" width="1.5" height="1.5" fill="#F00000"/><rect x="65.2" y="10.5" width="1.5" height="1.5" fill="#F00000"/><rect x="65.2" y="8.7" width="1" height="1" fill="#F00000"/><rect x="137.5" y="12.9" width="1" height="1" fill="#F00000"/><rect x="134.3" y="12.1" width="1.5" height="1.5" fill="#F00000"/><rect x="144.6" y="11.5" width="1" height="1" fill="#F00000"/><rect x="5.6" y="10.0" width="1" height="1" fill="#F00000"/><rect x="11.4" y="12.9" width="1" height="1" fill="#F00000"/><rect x="23.2" y="7.7" width="1.5" height="1.5" fill="#F00000"/><rect x="89.8" y="10.5" width="1" height="1" fill="#F00000"/><rect x="48.2" y="10.1" width="1" height="1" fill="#F00000"/><rect x="23.5" y="10.6" width="1" height="1" fill="#F00000"/><rect x="32.4" y="6.6" width="1.5" height="1.5" fill="#F00000"/><rect x="136.5" y="11.3" width="1" height="1" fill="#F00000"/><rect x="136.9" y="13.6" width="1" height="1" fill="#F00000"/><rect x="27.8" y="14.8" width="1" height="1" fill="#F00000"/><rect x="82.0" y="5.5" width="1" height="1" fill="#F00000"/><rect x="30.7" y="10.5" width="1" height="1" fill="#F00000"/><rect x="47.9" y="9.6" width="1" height="1" fill="#F00000"/><rect x="146.2" y="9.7" width="1" height="1" fill="#F00000"/><rect x="52.2" y="12.1" width="1" height="1" fill="#F00000"/><rect x="64.3" y="11.9" width="1" height="1" fill="#F00000"/><rect x="108.6" y="13.5" width="1" height="1" fill="#F00000"/><rect x="42.3" y="9.6" width="1" height="1" fill="#F00000"/><rect x="120.6" y="7.7" width="1" height="1" fill="#F00000"/><rect x="122.6" y="9.0" width="1.5" height="1.5" fill="#F00000"/><rect x="36.3" y="9.8" width="1" height="1" fill="#F00000"/><rect x="136.3" y="10.6" width="1" height="1" fill="#F00000"/><rect x="98.0" y="11.3" width="1" height="1" fill="#F00000"/><rect x="71.4" y="14.0" width="1" height="1" fill="#F00000"/><rect x="81.6" y="12.1" width="1" height="1" fill="#F00000"/><rect x="3.0" y="7.9" width="1" height="1" fill="#F00000"/><rect x="122.5" y="8.7" width="1" height="1" fill="#F00000"/></svg>



<!-- right panel -->
<div class="a" style="left:1151px;top:50px;width:1px;height:756px;background:#fff"></div>
<div class="a" style="left:1154px;top:53px;width:118px;height:753px;border-top:1px solid #fff;border-left:1px solid #fff;border-right:1px solid #ACA899"></div>
<div class="a" style="left:1151px;top:803px;width:125px;height:3px;background:#8E8C80"></div>
<div class="a" style="left:1157px;top:60px;width:109px;height:158px;border:1px solid #B0AE9E;box-shadow:inset 1px 1px 0 #fff,1px 1px 0 #fff"></div><div class="t" style="left:1165px;top:56px;padding:0 1px;background:#ECE9D8;font-weight:bold;font-size:12px">Flash</div>
<div class="btn" style="left:1169px;top:69px;width:33px;height:33px"></div>
<div class="a" style="left:1175px;top:75px;width:18px;height:8px;background:#0A0A0A"></div><div class="a" style="left:1176px;top:77px;width:2px;height:2px;background:#E02040"></div><div class="a" style="left:1176px;top:73px;width:1px;height:2px;background:#000"></div><div class="a" style="left:1176px;top:83px;width:1px;height:2px;background:#000"></div><div class="a" style="left:1181px;top:73px;width:1px;height:2px;background:#000"></div><div class="a" style="left:1181px;top:83px;width:1px;height:2px;background:#000"></div><div class="a" style="left:1186px;top:73px;width:1px;height:2px;background:#000"></div><div class="a" style="left:1186px;top:83px;width:1px;height:2px;background:#000"></div><div class="a" style="left:1191px;top:73px;width:1px;height:2px;background:#000"></div><div class="a" style="left:1191px;top:83px;width:1px;height:2px;background:#000"></div>
<div class="t" style="left:1184px;top:84px;font-family:'Liberation Serif',serif;font-weight:bold;font-size:18px;color:#0000D0">R</div>
<div class="btn" style="left:1225px;top:69px;width:34px;height:33px"></div>
<div class="a" style="left:1232px;top:75px;width:18px;height:8px;background:#0A0A0A"></div><div class="a" style="left:1233px;top:77px;width:2px;height:2px;background:#E02040"></div><div class="a" style="left:1233px;top:73px;width:1px;height:2px;background:#000"></div><div class="a" style="left:1233px;top:83px;width:1px;height:2px;background:#000"></div><div class="a" style="left:1238px;top:73px;width:1px;height:2px;background:#000"></div><div class="a" style="left:1238px;top:83px;width:1px;height:2px;background:#000"></div><div class="a" style="left:1243px;top:73px;width:1px;height:2px;background:#000"></div><div class="a" style="left:1243px;top:83px;width:1px;height:2px;background:#000"></div><div class="a" style="left:1248px;top:73px;width:1px;height:2px;background:#000"></div><div class="a" style="left:1248px;top:83px;width:1px;height:2px;background:#000"></div>
<div class="t" style="left:1236px;top:84px;font-family:'Liberation Serif',serif;font-weight:bold;font-size:19px;color:#E01010">W</div>
<div class="btn" style="left:1177px;top:103px;width:74px;height:25px;font-size:11px;line-height:25px">Head Map</div>
<div class="btn" style="left:1161px;top:129px;width:33px;height:32px"></div>
<div class="t" style="left:1165px;top:130px;font-family:'Liberation Serif',serif;font-weight:bold;font-size:16px;color:#000">ID</div><div class="a" style="left:1170px;top:145px;width:3px;height:3px;background:#000"></div><div class="a" style="left:1170px;top:150px;width:3px;height:3px;background:#000"></div><div class="a" style="left:1170px;top:155px;width:3px;height:3px;background:#000"></div><div class="t" style="left:1177px;top:144px;font-family:'Liberation Serif',serif;font-weight:bold;font-size:17px;color:#0000D0">R</div>
<div class="btn" style="left:1195px;top:129px;width:33px;height:32px;font-size:11px;line-height:30px">View</div>
<div class="btn" style="left:1228px;top:129px;width:34px;height:32px"></div>
<div class="t" style="left:1233px;top:130px;font-family:'Liberation Serif',serif;font-weight:bold;font-size:16px;color:#000">ID</div><div class="a" style="left:1236px;top:145px;width:3px;height:3px;background:#000"></div><div class="a" style="left:1236px;top:150px;width:3px;height:3px;background:#000"></div><div class="a" style="left:1236px;top:155px;width:3px;height:3px;background:#000"></div><div class="t" style="left:1241px;top:144px;font-family:'Liberation Serif',serif;font-weight:bold;font-size:17px;color:#E01010">W</div>
<div class="btn" style="left:1160px;top:164px;width:20px;height:25px;font-size:12px;font-weight:bold;line-height:23px;letter-spacing:-0.5px">OD</div>
<div class="btn" style="left:1184px;top:164px;width:75px;height:25px;font-size:11px;line-height:23px">Create FLASH</div>
<div class="btn" style="left:1184px;top:192px;width:75px;height:25px;font-size:11px;line-height:23px">Adapt Edit</div>
<div class="a" style="left:1157px;top:226px;width:109px;height:92px;border:1px solid #B0AE9E;box-shadow:inset 1px 1px 0 #fff,1px 1px 0 #fff"></div><div class="t" style="left:1165px;top:222px;padding:0 1px;background:#ECE9D8;font-weight:bold;font-size:12px">Memory</div>
<div class="btn" style="left:1169px;top:235px;width:33px;height:32px"></div>
<div class="a" style="left:1175px;top:240px;width:18px;height:8px;background:#0A0A0A"></div><div class="a" style="left:1176px;top:242px;width:2px;height:2px;background:#E02040"></div><div class="a" style="left:1176px;top:238px;width:1px;height:2px;background:#000"></div><div class="a" style="left:1176px;top:248px;width:1px;height:2px;background:#000"></div><div class="a" style="left:1181px;top:238px;width:1px;height:2px;background:#000"></div><div class="a" style="left:1181px;top:248px;width:1px;height:2px;background:#000"></div><div class="a" style="left:1186px;top:238px;width:1px;height:2px;background:#000"></div><div class="a" style="left:1186px;top:248px;width:1px;height:2px;background:#000"></div><div class="a" style="left:1191px;top:238px;width:1px;height:2px;background:#000"></div><div class="a" style="left:1191px;top:248px;width:1px;height:2px;background:#000"></div>
<div class="t" style="left:1184px;top:248px;font-family:'Liberation Serif',serif;font-weight:bold;font-size:18px;color:#0000D0">R</div>
<div class="btn" style="left:1221px;top:234px;width:33px;height:33px"></div>
<svg class="a" style="left:1221px;top:234px" width="33" height="33"><path d="M3 30 L3 21 L25 8 L28 11 L15 30 Z" fill="#0A0A0A"/><path d="M3 30 L3 22 L11 18 L15 24 L13 30 Z" fill="#1A1AA0"/><path d="M11 22 L26 9.5" stroke="#F4F4F0" stroke-width="2.2"/><circle cx="26.5" cy="8.5" r="2.8" fill="#707070" stroke="#000" stroke-width="1.3" stroke-dasharray="1.5 1"/><path d="M3 30 a5 5 0 0 1 6 -4 L9 30Z" fill="#A0A0A0"/><path d="M19 14 L24 25 M29 12 L24 25" stroke="#707070" stroke-width="1.3" fill="none"/><circle cx="22" cy="27.5" r="2.5" fill="#F8E8D8" stroke="#C01010" stroke-width="1.5"/><circle cx="28" cy="27.5" r="2.5" fill="#F8E8D8" stroke="#C01010" stroke-width="1.5"/></svg>
<div class="chk" style="left:1160px;top:270px"></div>
<div class="t" style="left:1178px;top:270px;font-size:12px;font-weight:bold">1</div>
<div class="chk" style="left:1160px;top:286px"></div>
<div class="t" style="left:1178px;top:286px;font-size:12px;font-weight:bold">2</div>
<div class="btn" style="left:1197px;top:272px;width:52px;height:25px;font-size:11px;line-height:23px">HM RAM</div>
<div class="chk" style="left:1165px;top:303px"></div>
<div class="t" style="left:1184px;top:302px;font-size:12px;font-weight:bold">6 Heads</div>
<div class="a" style="left:1157px;top:326px;width:109px;height:68px;border:1px solid #B0AE9E;box-shadow:inset 1px 1px 0 #fff,1px 1px 0 #fff"></div><div class="t" style="left:1165px;top:322px;padding:0 1px;background:#ECE9D8;font-weight:bold;font-size:12px">Module</div>
<div class="chk" style="left:1160px;top:338px"></div>
<div class="chk" style="left:1160px;top:355px"></div>
<div class="chk" style="left:1160px;top:371px"></div>
<div class="chk" style="left:1251px;top:338px"></div>
<div class="btn" style="left:1174px;top:334px;width:33px;height:33px"></div>
<div class="t" style="left:1178px;top:335px;font-family:'Liberation Serif',serif;font-weight:bold;font-size:16px;color:#000">ID</div><div class="a" style="left:1183px;top:351px;width:3px;height:3px;background:#000"></div><div class="a" style="left:1183px;top:356px;width:3px;height:3px;background:#000"></div><div class="a" style="left:1183px;top:361px;width:3px;height:3px;background:#000"></div><div class="t" style="left:1189px;top:349px;font-family:'Liberation Serif',serif;font-weight:bold;font-size:17px;color:#0000D0">R</div>
<div class="btn" style="left:1214px;top:334px;width:33px;height:33px"></div>
<div class="t" style="left:1218px;top:335px;font-family:'Liberation Serif',serif;font-weight:bold;font-size:16px;color:#000">ID</div><div class="a" style="left:1222px;top:351px;width:3px;height:3px;background:#000"></div><div class="a" style="left:1222px;top:356px;width:3px;height:3px;background:#000"></div><div class="a" style="left:1222px;top:361px;width:3px;height:3px;background:#000"></div><div class="t" style="left:1227px;top:349px;font-family:'Liberation Serif',serif;font-weight:bold;font-size:17px;color:#E01010">W</div>
<div class="btn" style="left:1174px;top:368px;width:36px;height:23px;font-size:11px;line-height:21px">View</div>
<div class="btn" style="left:1213px;top:368px;width:37px;height:23px;font-size:11px;line-height:21px">Check</div>
<div class="a" style="left:1157px;top:402px;width:109px;height:45px;border:1px solid #B0AE9E;box-shadow:inset 1px 1px 0 #fff,1px 1px 0 #fff"></div><div class="t" style="left:1165px;top:398px;padding:0 1px;background:#ECE9D8;font-weight:bold;font-size:12px">Cylinder</div>
<div class="btn" style="left:1161px;top:410px;width:33px;height:33px"></div>
<div class="a" style="left:1164px;top:413px;width:28px;height:28px;border:2.5px solid #111;border-radius:50%"></div>
<div class="t" style="left:1170px;top:418px;font-family:'Liberation Serif',serif;font-weight:bold;font-size:18px;color:#0000D0">R</div>
<div class="btn" style="left:1204px;top:410px;width:15px;height:33px"></div>
<svg class="a" style="left:1204px;top:410px" width="15" height="33"><rect x="6" y="4" width="3" height="8" fill="#C01010"/><rect x="4" y="11" width="7" height="8" rx="1" fill="#C01010"/><rect x="5" y="19" width="5" height="4" fill="#777"/><text x="7.5" y="30" font-size="7" text-anchor="middle" font-family="Liberation Sans" font-weight="bold" fill="#000">1=0</text></svg>
<div class="btn" style="left:1229px;top:410px;width:33px;height:33px"></div>
<div class="a" style="left:1232px;top:413px;width:28px;height:28px;border:2.5px solid #111;border-radius:50%"></div>
<div class="t" style="left:1235px;top:419px;font-family:'Liberation Serif',serif;font-weight:bold;font-size:16px;color:#E01010">W</div>
<div class="btn" style="left:1159px;top:450px;width:109px;height:20px;font-size:12px;font-weight:bold;line-height:18px;color:#E01010">Read ALL</div>
<div class="btn" style="left:1159px;top:470px;width:109px;height:20px;font-size:12px;font-weight:bold;line-height:18px;color:#1010C0;border:1px solid #000;box-shadow:inset 1px 1px 0 #fff,inset -1px -1px 0 #716F64">Defect List</div>
<div class="btn" style="left:1159px;top:490px;width:109px;height:20px;font-size:12px;font-weight:bold;line-height:18px;color:#000">Clr Def. List</div>
<div class="btn" style="left:1159px;top:510px;width:109px;height:20px;font-size:12px;font-weight:bold;line-height:18px;color:#000">SMART</div>
<div class="btn" style="left:1159px;top:530px;width:109px;height:20px;font-size:12px;font-weight:bold;line-height:18px;color:#000">Passport</div>
<div class="btn" style="left:1159px;top:550px;width:109px;height:20px;font-size:12px;font-weight:bold;line-height:18px;color:#000">Format</div>
<div class="btn" style="left:1159px;top:570px;width:109px;height:20px;font-size:12px;font-weight:bold;line-height:18px;color:#000">Translator</div>
<div class="btn" style="left:1159px;top:590px;width:109px;height:20px;font-size:12px;font-weight:bold;line-height:18px;color:#000">Self Test</div>
<div class="btn" style="left:1159px;top:610px;width:109px;height:20px;font-size:12px;font-weight:bold;line-height:18px;color:#000">Calibrator (SA,UA)</div>
<div class="btn" style="left:1159px;top:630px;width:109px;height:20px;font-size:12px;font-weight:bold;line-height:18px;color:#000">ARCO Manual</div>
<div class="btn" style="left:1159px;top:650px;width:109px;height:20px;font-size:12px;font-weight:bold;line-height:18px;color:#000">Calibrator 28</div>
<div class="btn" style="left:1159px;top:670px;width:109px;height:20px;font-size:12px;font-weight:bold;line-height:18px;color:#000">Test 28 Mod Run</div>
<div class="btn" style="left:1159px;top:690px;width:109px;height:20px;font-size:12px;font-weight:bold;line-height:18px;color:#000">ATA SCAN</div>
<div class="btn" style="left:1159px;top:710px;width:109px;height:20px;font-size:12px;font-weight:bold;line-height:18px;color:#000">CHS SCAN</div>
<div class="btn" style="left:1159px;top:741px;width:109px;height:20px"></div>
<!-- P-List dialog -->
<div class="a" style="left:611px;top:150px;width:398px;height:568px;background:#6E80D2;border-radius:7px 7px 0 0"></div>
<div class="a" style="left:611px;top:150px;width:398px;height:29px;border-radius:7px 7px 0 0;background:linear-gradient(#9CB8F2 0,#8AA8EE 2px,#7694E0 5px,#7391DC 12px,#7A9CE6 20px,#80A8EE 25px,#7494E2 28px,#6E88D8 29px)"></div>
<div class="a" style="left:614px;top:179px;width:392px;height:535px;background:#ECE9D8;border-top:1px solid #fff"></div>
<div class="t" style="left:617px;top:159px;font-size:13px;font-weight:bold;color:#DDE6F8;letter-spacing:0.13px">P-List (Defect List Entries = 2634, Select = 0)</div>
<div class="a" style="left:983px;top:155px;width:21px;height:21px;border:1px solid #E8D8E8;border-radius:3px;background:linear-gradient(135deg,#C89098,#B06878)"></div>
<svg class="a" style="left:983px;top:155px" width="21" height="21"><path d="M6 6 L15 15 M15 6 L6 15" stroke="#fff" stroke-width="2.2"/></svg>
<!-- grid frame -->
<div class="a" style="left:614px;top:179px;width:300px;height:480px;border-top:1px solid #fff;border-left:1px solid #fff"></div>
<div class="a" style="left:615px;top:180px;width:297px;height:478px;border-top:1px solid #7A6A60;border-left:1px solid #7A6A60"></div>
<div class="a" style="left:616px;top:181px;width:277px;height:19px;background:#007F00"></div>
<div class="a" style="left:645px;top:181px;width:1px;height:19px;background:#7FE07F"></div>
<div class="a" style="left:681px;top:181px;width:1px;height:19px;background:#7FE07F"></div>
<div class="a" style="left:723px;top:181px;width:1px;height:19px;background:#7FE07F"></div>
<div class="a" style="left:779px;top:181px;width:1px;height:19px;background:#7FE07F"></div>
<div class="a" style="left:836px;top:181px;width:1px;height:19px;background:#7FE07F"></div>
<div class="t" style="left:616px;top:185px;width:29px;text-align:center;font-size:11px;color:#0A2A0A">X</div>
<div class="t" style="left:645px;top:185px;width:36px;text-align:center;font-size:11px;color:#0A2A0A"><span style="font-size:8px;position:relative;top:-3px">1</span></div>
<div class="t" style="left:681px;top:185px;width:42px;text-align:center;font-size:11px;color:#0A2A0A">Head</div>
<div class="t" style="left:723px;top:185px;width:56px;text-align:center;font-size:11px;color:#0A2A0A">Cylinder</div>
<div class="t" style="left:779px;top:185px;width:57px;text-align:center;font-size:11px;color:#0A2A0A">BSector</div>
<div class="t" style="left:836px;top:185px;width:57px;text-align:center;font-size:11px;color:#0A2A0A">ESector</div>
<div class="a" style="left:616px;top:200px;width:277px;height:457px;background:#fff"></div>
<div class="a" style="left:616px;top:219px;width:277px;height:1px;background:#C8C8C8"></div>
<div class="a" style="left:616px;top:238px;width:277px;height:1px;background:#C8C8C8"></div>
<div class="a" style="left:616px;top:257px;width:277px;height:1px;background:#C8C8C8"></div>
<div class="a" style="left:616px;top:276px;width:277px;height:1px;background:#C8C8C8"></div>
<div class="a" style="left:616px;top:295px;width:277px;height:1px;background:#C8C8C8"></div>
<div class="a" style="left:616px;top:314px;width:277px;height:1px;background:#C8C8C8"></div>
<div class="a" style="left:616px;top:333px;width:277px;height:1px;background:#C8C8C8"></div>
<div class="a" style="left:616px;top:352px;width:277px;height:1px;background:#C8C8C8"></div>
<div class="a" style="left:616px;top:371px;width:277px;height:1px;background:#C8C8C8"></div>
<div class="a" style="left:616px;top:390px;width:277px;height:1px;background:#C8C8C8"></div>
<div class="a" style="left:616px;top:409px;width:277px;height:1px;background:#C8C8C8"></div>
<div class="a" style="left:616px;top:428px;width:277px;height:1px;background:#C8C8C8"></div>
<div class="a" style="left:616px;top:447px;width:277px;height:1px;background:#C8C8C8"></div>
<div class="a" style="left:616px;top:466px;width:277px;height:1px;background:#C8C8C8"></div>
<div class="a" style="left:616px;top:485px;width:277px;height:1px;background:#C8C8C8"></div>
<div class="a" style="left:616px;top:504px;width:277px;height:1px;background:#C8C8C8"></div>
<div class="a" style="left:616px;top:523px;width:277px;height:1px;background:#C8C8C8"></div>
<div class="a" style="left:616px;top:542px;width:277px;height:1px;background:#C8C8C8"></div>
<div class="a" style="left:616px;top:561px;width:277px;height:1px;background:#C8C8C8"></div>
<div class="a" style="left:616px;top:580px;width:277px;height:1px;background:#C8C8C8"></div>
<div class="a" style="left:616px;top:599px;width:277px;height:1px;background:#C8C8C8"></div>
<div class="a" style="left:616px;top:618px;width:277px;height:1px;background:#C8C8C8"></div>
<div class="a" style="left:616px;top:637px;width:277px;height:1px;background:#C8C8C8"></div>
<div class="a" style="left:616px;top:656px;width:277px;height:1px;background:#C8C8C8"></div>
<div class="a" style="left:645px;top:200px;width:1px;height:457px;background:#C8C8C8"></div>
<div class="a" style="left:681px;top:200px;width:1px;height:457px;background:#C8C8C8"></div>
<div class="a" style="left:723px;top:200px;width:1px;height:457px;background:#C8C8C8"></div>
<div class="a" style="left:779px;top:200px;width:1px;height:457px;background:#C8C8C8"></div>
<div class="a" style="left:836px;top:200px;width:1px;height:457px;background:#C8C8C8"></div>
<div class="a" style="left:623px;top:202px;width:16px;height:16px;border:1.5px solid #000;background:#fff"></div>
<div class="t" style="left:645px;top:205px;width:36px;text-align:center;font-size:11px">1</div>
<div class="t" style="left:681px;top:205px;width:42px;text-align:center;font-size:11px">0</div>
<div class="t" style="left:723px;top:205px;width:56px;text-align:center;font-size:11px">0</div>
<div class="t" style="left:779px;top:205px;width:57px;text-align:center;font-size:11px">Cylinder</div>
<div class="t" style="left:836px;top:205px;width:57px;text-align:center;font-size:11px">Cylinder</div>
<div class="a" style="left:623px;top:221px;width:16px;height:16px;border:1.5px solid #000;background:#fff"></div>
<div class="t" style="left:645px;top:224px;width:36px;text-align:center;font-size:11px">2</div>
<div class="t" style="left:681px;top:224px;width:42px;text-align:center;font-size:11px">1</div>
<div class="t" style="left:723px;top:224px;width:56px;text-align:center;font-size:11px">0</div>
<div class="t" style="left:779px;top:224px;width:57px;text-align:center;font-size:11px">Cylinder</div>
<div class="t" style="left:836px;top:224px;width:57px;text-align:center;font-size:11px">Cylinder</div>
<div class="a" style="left:623px;top:240px;width:16px;height:16px;border:1.5px solid #000;background:#fff"></div>
<div class="t" style="left:645px;top:243px;width:36px;text-align:center;font-size:11px">3</div>
<div class="t" style="left:681px;top:243px;width:42px;text-align:center;font-size:11px">2</div>
<div class="t" style="left:723px;top:243px;width:56px;text-align:center;font-size:11px">0</div>
<div class="t" style="left:779px;top:243px;width:57px;text-align:center;font-size:11px">Cylinder</div>
<div class="t" style="left:836px;top:243px;width:57px;text-align:center;font-size:11px">Cylinder</div>
<div class="a" style="left:623px;top:259px;width:16px;height:16px;border:1.5px solid #000;background:#fff"></div>
<div class="t" style="left:645px;top:262px;width:36px;text-align:center;font-size:11px">4</div>
<div class="t" style="left:681px;top:262px;width:42px;text-align:center;font-size:11px">2</div>
<div class="t" style="left:723px;top:262px;width:56px;text-align:center;font-size:11px">239</div>
<div class="t" style="left:779px;top:262px;width:57px;text-align:center;font-size:11px">352</div>
<div class="t" style="left:836px;top:262px;width:57px;text-align:center;font-size:11px">359</div>
<div class="a" style="left:623px;top:278px;width:16px;height:16px;border:1.5px solid #000;background:#fff"></div>
<div class="t" style="left:645px;top:281px;width:36px;text-align:center;font-size:11px">5</div>
<div class="t" style="left:681px;top:281px;width:42px;text-align:center;font-size:11px">2</div>
<div class="t" style="left:723px;top:281px;width:56px;text-align:center;font-size:11px">240</div>
<div class="t" style="left:779px;top:281px;width:57px;text-align:center;font-size:11px">352</div>
<div class="t" style="left:836px;top:281px;width:57px;text-align:center;font-size:11px">359</div>
<div class="a" style="left:623px;top:297px;width:16px;height:16px;border:1.5px solid #000;background:#fff"></div>
<div class="t" style="left:645px;top:300px;width:36px;text-align:center;font-size:11px">6</div>
<div class="t" style="left:681px;top:300px;width:42px;text-align:center;font-size:11px">2</div>
<div class="t" style="left:723px;top:300px;width:56px;text-align:center;font-size:11px">241</div>
<div class="t" style="left:779px;top:300px;width:57px;text-align:center;font-size:11px">352</div>
<div class="t" style="left:836px;top:300px;width:57px;text-align:center;font-size:11px">359</div>
<div class="a" style="left:623px;top:316px;width:16px;height:16px;border:1.5px solid #000;background:#fff"></div>
<div class="t" style="left:645px;top:319px;width:36px;text-align:center;font-size:11px">7</div>
<div class="t" style="left:681px;top:319px;width:42px;text-align:center;font-size:11px">2</div>
<div class="t" style="left:723px;top:319px;width:56px;text-align:center;font-size:11px">242</div>
<div class="t" style="left:779px;top:319px;width:57px;text-align:center;font-size:11px">352</div>
<div class="t" style="left:836px;top:319px;width:57px;text-align:center;font-size:11px">359</div>
<div class="a" style="left:623px;top:335px;width:16px;height:16px;border:1.5px solid #000;background:#fff"></div>
<div class="t" style="left:645px;top:338px;width:36px;text-align:center;font-size:11px">8</div>
<div class="t" style="left:681px;top:338px;width:42px;text-align:center;font-size:11px">2</div>
<div class="t" style="left:723px;top:338px;width:56px;text-align:center;font-size:11px">243</div>
<div class="t" style="left:779px;top:338px;width:57px;text-align:center;font-size:11px">352</div>
<div class="t" style="left:836px;top:338px;width:57px;text-align:center;font-size:11px">359</div>
<div class="a" style="left:623px;top:354px;width:16px;height:16px;border:1.5px solid #000;background:#fff"></div>
<div class="t" style="left:645px;top:357px;width:36px;text-align:center;font-size:11px">9</div>
<div class="t" style="left:681px;top:357px;width:42px;text-align:center;font-size:11px">2</div>
<div class="t" style="left:723px;top:357px;width:56px;text-align:center;font-size:11px">244</div>
<div class="t" style="left:779px;top:357px;width:57px;text-align:center;font-size:11px">352</div>
<div class="t" style="left:836px;top:357px;width:57px;text-align:center;font-size:11px">359</div>
<div class="a" style="left:623px;top:373px;width:16px;height:16px;border:1.5px solid #000;background:#fff"></div>
<div class="t" style="left:645px;top:376px;width:36px;text-align:center;font-size:11px">10</div>
<div class="t" style="left:681px;top:376px;width:42px;text-align:center;font-size:11px">2</div>
<div class="t" style="left:723px;top:376px;width:56px;text-align:center;font-size:11px">245</div>
<div class="t" style="left:779px;top:376px;width:57px;text-align:center;font-size:11px">352</div>
<div class="t" style="left:836px;top:376px;width:57px;text-align:center;font-size:11px">359</div>
<div class="a" style="left:623px;top:392px;width:16px;height:16px;border:1.5px solid #000;background:#fff"></div>
<div class="t" style="left:645px;top:395px;width:36px;text-align:center;font-size:11px">11</div>
<div class="t" style="left:681px;top:395px;width:42px;text-align:center;font-size:11px">2</div>
<div class="t" style="left:723px;top:395px;width:56px;text-align:center;font-size:11px">246</div>
<div class="t" style="left:779px;top:395px;width:57px;text-align:center;font-size:11px">352</div>
<div class="t" style="left:836px;top:395px;width:57px;text-align:center;font-size:11px">359</div>
<div class="a" style="left:623px;top:411px;width:16px;height:16px;border:1.5px solid #000;background:#fff"></div>
<div class="t" style="left:645px;top:414px;width:36px;text-align:center;font-size:11px">12</div>
<div class="t" style="left:681px;top:414px;width:42px;text-align:center;font-size:11px">2</div>
<div class="t" style="left:723px;top:414px;width:56px;text-align:center;font-size:11px">247</div>
<div class="t" style="left:779px;top:414px;width:57px;text-align:center;font-size:11px">352</div>
<div class="t" style="left:836px;top:414px;width:57px;text-align:center;font-size:11px">359</div>
<div class="a" style="left:623px;top:430px;width:16px;height:16px;border:1.5px solid #000;background:#fff"></div>
<div class="t" style="left:645px;top:433px;width:36px;text-align:center;font-size:11px">13</div>
<div class="t" style="left:681px;top:433px;width:42px;text-align:center;font-size:11px">2</div>
<div class="t" style="left:723px;top:433px;width:56px;text-align:center;font-size:11px">248</div>
<div class="t" style="left:779px;top:433px;width:57px;text-align:center;font-size:11px">352</div>
<div class="t" style="left:836px;top:433px;width:57px;text-align:center;font-size:11px">359</div>
<div class="a" style="left:623px;top:449px;width:16px;height:16px;border:1.5px solid #000;background:#fff"></div>
<div class="t" style="left:645px;top:452px;width:36px;text-align:center;font-size:11px">14</div>
<div class="t" style="left:681px;top:452px;width:42px;text-align:center;font-size:11px">2</div>
<div class="t" style="left:723px;top:452px;width:56px;text-align:center;font-size:11px">249</div>
<div class="t" style="left:779px;top:452px;width:57px;text-align:center;font-size:11px">352</div>
<div class="t" style="left:836px;top:452px;width:57px;text-align:center;font-size:11px">359</div>
<div class="a" style="left:623px;top:468px;width:16px;height:16px;border:1.5px solid #000;background:#fff"></div>
<div class="t" style="left:645px;top:471px;width:36px;text-align:center;font-size:11px">15</div>
<div class="t" style="left:681px;top:471px;width:42px;text-align:center;font-size:11px">2</div>
<div class="t" style="left:723px;top:471px;width:56px;text-align:center;font-size:11px">250</div>
<div class="t" style="left:779px;top:471px;width:57px;text-align:center;font-size:11px">352</div>
<div class="t" style="left:836px;top:471px;width:57px;text-align:center;font-size:11px">359</div>
<div class="a" style="left:623px;top:487px;width:16px;height:16px;border:1.5px solid #000;background:#fff"></div>
<div class="t" style="left:645px;top:490px;width:36px;text-align:center;font-size:11px">16</div>
<div class="t" style="left:681px;top:490px;width:42px;text-align:center;font-size:11px">2</div>
<div class="t" style="left:723px;top:490px;width:56px;text-align:center;font-size:11px">251</div>
<div class="t" style="left:779px;top:490px;width:57px;text-align:center;font-size:11px">352</div>
<div class="t" style="left:836px;top:490px;width:57px;text-align:center;font-size:11px">359</div>
<div class="a" style="left:623px;top:506px;width:16px;height:16px;border:1.5px solid #000;background:#fff"></div>
<div class="t" style="left:645px;top:509px;width:36px;text-align:center;font-size:11px">17</div>
<div class="t" style="left:681px;top:509px;width:42px;text-align:center;font-size:11px">2</div>
<div class="t" style="left:723px;top:509px;width:56px;text-align:center;font-size:11px">252</div>
<div class="t" style="left:779px;top:509px;width:57px;text-align:center;font-size:11px">352</div>
<div class="t" style="left:836px;top:509px;width:57px;text-align:center;font-size:11px">359</div>
<div class="a" style="left:623px;top:525px;width:16px;height:16px;border:1.5px solid #000;background:#fff"></div>
<div class="t" style="left:645px;top:528px;width:36px;text-align:center;font-size:11px">18</div>
<div class="t" style="left:681px;top:528px;width:42px;text-align:center;font-size:11px">2</div>
<div class="t" style="left:723px;top:528px;width:56px;text-align:center;font-size:11px">253</div>
<div class="t" style="left:779px;top:528px;width:57px;text-align:center;font-size:11px">352</div>
<div class="t" style="left:836px;top:528px;width:57px;text-align:center;font-size:11px">359</div>
<div class="a" style="left:623px;top:544px;width:16px;height:16px;border:1.5px solid #000;background:#fff"></div>
<div class="t" style="left:645px;top:547px;width:36px;text-align:center;font-size:11px">19</div>
<div class="t" style="left:681px;top:547px;width:42px;text-align:center;font-size:11px">2</div>
<div class="t" style="left:723px;top:547px;width:56px;text-align:center;font-size:11px">254</div>
<div class="t" style="left:779px;top:547px;width:57px;text-align:center;font-size:11px">352</div>
<div class="t" style="left:836px;top:547px;width:57px;text-align:center;font-size:11px">359</div>
<div class="a" style="left:623px;top:563px;width:16px;height:16px;border:1.5px solid #000;background:#fff"></div>
<div class="t" style="left:645px;top:566px;width:36px;text-align:center;font-size:11px">20</div>
<div class="t" style="left:681px;top:566px;width:42px;text-align:center;font-size:11px">2</div>
<div class="t" style="left:723px;top:566px;width:56px;text-align:center;font-size:11px">255</div>
<div class="t" style="left:779px;top:566px;width:57px;text-align:center;font-size:11px">352</div>
<div class="t" style="left:836px;top:566px;width:57px;text-align:center;font-size:11px">359</div>
<div class="a" style="left:623px;top:582px;width:16px;height:16px;border:1.5px solid #000;background:#fff"></div>
<div class="t" style="left:645px;top:585px;width:36px;text-align:center;font-size:11px">21</div>
<div class="t" style="left:681px;top:585px;width:42px;text-align:center;font-size:11px">2</div>
<div class="t" style="left:723px;top:585px;width:56px;text-align:center;font-size:11px">256</div>
<div class="t" style="left:779px;top:585px;width:57px;text-align:center;font-size:11px">352</div>
<div class="t" style="left:836px;top:585px;width:57px;text-align:center;font-size:11px">359</div>
<div class="a" style="left:623px;top:601px;width:16px;height:16px;border:1.5px solid #000;background:#fff"></div>
<div class="t" style="left:645px;top:604px;width:36px;text-align:center;font-size:11px">22</div>
<div class="t" style="left:681px;top:604px;width:42px;text-align:center;font-size:11px">2</div>
<div class="t" style="left:723px;top:604px;width:56px;text-align:center;font-size:11px">257</div>
<div class="t" style="left:779px;top:604px;width:57px;text-align:center;font-size:11px">352</div>
<div class="t" style="left:836px;top:604px;width:57px;text-align:center;font-size:11px">359</div>
<div class="a" style="left:623px;top:620px;width:16px;height:16px;border:1.5px solid #000;background:#fff"></div>
<div class="t" style="left:645px;top:623px;width:36px;text-align:center;font-size:11px">23</div>
<div class="t" style="left:681px;top:623px;width:42px;text-align:center;font-size:11px">2</div>
<div class="t" style="left:723px;top:623px;width:56px;text-align:center;font-size:11px">258</div>
<div class="t" style="left:779px;top:623px;width:57px;text-align:center;font-size:11px">352</div>
<div class="t" style="left:836px;top:623px;width:57px;text-align:center;font-size:11px">359</div>
<div class="a" style="left:623px;top:639px;width:16px;height:16px;border:1.5px solid #000;background:#fff"></div>
<div class="t" style="left:645px;top:642px;width:36px;text-align:center;font-size:11px">24</div>
<div class="t" style="left:681px;top:642px;width:42px;text-align:center;font-size:11px">2</div>
<div class="t" style="left:723px;top:642px;width:56px;text-align:center;font-size:11px">259</div>
<div class="t" style="left:779px;top:642px;width:57px;text-align:center;font-size:11px">352</div>
<div class="t" style="left:836px;top:642px;width:57px;text-align:center;font-size:11px">359</div>
<!-- scrollbar -->
<div class="a" style="left:893px;top:181px;width:18px;height:476px;background:linear-gradient(90deg,#F3F1EC,#FEFEFB)"></div>
<div class="a" style="left:894px;top:182px;width:16px;height:17px;border:1px solid #B8C8F0;border-radius:2px;background:linear-gradient(135deg,#D8E4FC,#B8CCF8)"></div>
<svg class="a" style="left:894px;top:182px" width="16" height="17"><path d="M4 10 L8 6 L12 10" stroke="#4D6185" stroke-width="2" fill="none"/></svg>
<div class="a" style="left:894px;top:200px;width:16px;height:14px;border:1px solid #B8C8F0;border-radius:2px;background:linear-gradient(90deg,#C8D8FC,#B4C8F6)"></div>
<div class="a" style="left:899px;top:204px;width:6px;height:6px;border-top:1px solid #8CA8E8;border-bottom:1px solid #8CA8E8"></div>
<div class="a" style="left:894px;top:643px;width:16px;height:14px;border:1px solid #B8C8F0;border-radius:2px;background:linear-gradient(135deg,#D8E4FC,#B8CCF8)"></div>
<svg class="a" style="left:894px;top:643px" width="16" height="14"><path d="M4 5 L8 9 L12 5" stroke="#4D6185" stroke-width="2" fill="none"/></svg>
<div class="a" style="left:910px;top:180px;width:1px;height:478px;background:#fff"></div>
<div class="a" style="left:911px;top:180px;width:3px;height:476px;background:#ECE9D8"></div>
<div class="a" style="left:892px;top:200px;width:1px;height:457px;background:#A0A0A0"></div>
<div class="a" style="left:911px;top:656px;width:95px;height:1px;background:#8E8C80"></div>
<div class="a" style="left:614px;top:657px;width:392px;height:1px;background:#fff"></div>
<!-- buttons -->
<div class="btn" style="left:923px;top:187px;width:75px;height:25px;font-size:11px;line-height:23px">Check</div>
<div class="btn" style="left:923px;top:243px;width:75px;height:25px;font-size:11px;line-height:23px">Sort</div>
<div class="btn" style="left:923px;top:275px;width:75px;height:24px;font-size:11px;line-height:22px">Delete All</div>
<div class="btn" style="left:923px;top:299px;width:75px;height:25px;font-size:11px;line-height:23px">Delete Select</div>
<div class="btn" style="left:923px;top:331px;width:75px;height:24px;font-size:11px;line-height:22px">Insert Defect</div>
<div class="btn" style="left:923px;top:355px;width:75px;height:24px;font-size:11px;line-height:22px">Add Defect</div>
<div class="btn" style="left:923px;top:379px;width:75px;height:25px;font-size:11px;line-height:23px">Edit</div>
<div class="btn" style="left:923px;top:412px;width:75px;height:25px;font-size:11px;line-height:23px">Del Head Def</div>
<div class="btn" style="left:923px;top:444px;width:75px;height:24px;font-size:11px;line-height:22px">Group</div>
<div class="btn" style="left:923px;top:468px;width:75px;height:25px;font-size:11px;line-height:23px">All - &gt; CYL</div>
<div class="btn" style="left:923px;top:500px;width:75px;height:25px;font-size:11px;line-height:23px">Hd All - &gt; CYL</div>
<div class="a" style="left:913px;top:536px;width:8px;height:8px;border-radius:50%;background:#F00000"></div>
<div class="t" style="left:926px;top:533px;font-size:11px">Head</div>
<div class="a" style="left:958px;top:529px;width:22px;height:20px;background:#fff;border:1px solid #ACA899;border-top-color:#716F64;border-left-color:#716F64"></div>
<div class="t" style="left:961px;top:534px;font-size:11px">0</div>
<div class="btn" style="left:981px;top:529px;width:16px;height:10px"></div>
<div class="btn" style="left:981px;top:539px;width:16px;height:10px"></div>
<svg class="a" style="left:981px;top:529px" width="16" height="20"><path d="M6 6 L10 6 L8 4Z M6 14 L10 14 L8 16Z" fill="#000"/></svg>
<div class="btn" style="left:923px;top:555px;width:75px;height:25px;font-size:11px;line-height:23px">PSN Check</div>
<div class="btn" style="left:923px;top:588px;width:75px;height:25px;font-size:11px;line-height:23px;border:1px solid #000;box-shadow:inset 1px 1px 0 #fff,inset -1px -1px 0 #716F64">Statistic</div>
<!-- bottom buttons -->
<div class="btn" style="left:621px;top:665px;width:25px;height:25px"></div>
<svg class="a" style="left:621px;top:665px" width="25" height="25"><path d="M6 12 L10 17 L19 7" stroke="#1A9A1A" stroke-width="2.4" fill="none"/></svg>
<div class="btn" style="left:880px;top:670px;width:60px;height:24px"></div>
<svg class="a" style="left:886px;top:673px" width="18" height="18"><path d="M2 10 L7 15 L16 4" stroke="#20A020" stroke-width="3.2" fill="none"/></svg>
<div class="t" style="left:906px;top:677px;font-size:11px">Write</div>
<div class="btn" style="left:943px;top:670px;width:60px;height:24px"></div>
<svg class="a" style="left:947px;top:674px" width="16" height="16"><path d="M2 2 L13 14 M13 2 L2 14" stroke="#D01010" stroke-width="3"/></svg>
<div class="t" style="left:966px;top:677px;font-size:11px">Cancel</div>

<!-- Head Defect Statistic dialog -->
<div class="a" style="left:37px;top:338px;width:564px;height:423px;background:#0A24B8;border-radius:7px 7px 0 0"></div>
<div class="a" style="left:37px;top:338px;width:564px;height:29px;border-radius:7px 7px 0 0;background:linear-gradient(#0A3CB0 0,#3A8CFF 1.5px,#2A7AF8 3px,#0058E6 6px,#0054E3 12px,#005CF0 18px,#0066FF 23px,#0060F4 26px,#0034B0 28px,#0030A8 29px)"></div>
<div class="a" style="left:40px;top:367px;width:558px;height:391px;background:#ECE9D8;border-top:1px solid #fff"></div>
<div class="t" style="left:43px;top:347px;font-size:13px;font-weight:bold;color:#fff;text-shadow:1px 1px 0 #0A1E80">Head Defect Statictic</div>
<div class="a" style="left:575px;top:344px;width:21px;height:20px;border:1px solid #fff;border-radius:3px;background:radial-gradient(circle at 30% 30%,#F0A080,#E05A30 60%,#C03818)"></div>
<svg class="a" style="left:575px;top:344px" width="21" height="20"><path d="M6 5 L15 14 M15 5 L6 14" stroke="#fff" stroke-width="2.2"/></svg>
<svg class="a" style="left:37px;top:338px" width="563" height="423" font-family="Liberation Sans" ><line x1="48" y1="337.5" x2="466" y2="337.5" stroke="#8A8A80" stroke-dasharray="4 3"/>
<line x1="48" y1="320.5" x2="466" y2="320.5" stroke="#8A8A80" stroke-dasharray="4 3"/>
<line x1="48" y1="302.5" x2="466" y2="302.5" stroke="#8A8A80" stroke-dasharray="4 3"/>
<line x1="48" y1="285.5" x2="466" y2="285.5" stroke="#8A8A80" stroke-dasharray="4 3"/>
<line x1="48" y1="268.5" x2="466" y2="268.5" stroke="#8A8A80" stroke-dasharray="4 3"/>
<line x1="48" y1="250.5" x2="466" y2="250.5" stroke="#8A8A80" stroke-dasharray="4 3"/>
<line x1="48" y1="233.5" x2="466" y2="233.5" stroke="#8A8A80" stroke-dasharray="4 3"/>
<line x1="48" y1="216.5" x2="466" y2="216.5" stroke="#8A8A80" stroke-dasharray="4 3"/>
<line x1="48" y1="199.5" x2="466" y2="199.5" stroke="#8A8A80" stroke-dasharray="4 3"/>
<line x1="48" y1="182.5" x2="466" y2="182.5" stroke="#8A8A80" stroke-dasharray="4 3"/>
<line x1="48" y1="164.5" x2="466" y2="164.5" stroke="#8A8A80" stroke-dasharray="4 3"/>
<line x1="48" y1="147.5" x2="466" y2="147.5" stroke="#8A8A80" stroke-dasharray="4 3"/>
<line x1="48" y1="130.5" x2="466" y2="130.5" stroke="#8A8A80" stroke-dasharray="4 3"/>
<line x1="48" y1="112.5" x2="466" y2="112.5" stroke="#8A8A80" stroke-dasharray="4 3"/>
<line x1="48" y1="95.5" x2="466" y2="95.5" stroke="#8A8A80" stroke-dasharray="4 3"/>
<line x1="48" y1="78.5" x2="466" y2="78.5" stroke="#8A8A80" stroke-dasharray="4 3"/>
<line x1="79.5" y1="63" x2="79.5" y2="353" stroke="#8A8A80" stroke-dasharray="4 3"/>
<line x1="130.5" y1="63" x2="130.5" y2="353" stroke="#8A8A80" stroke-dasharray="4 3"/>
<line x1="181.5" y1="63" x2="181.5" y2="353" stroke="#8A8A80" stroke-dasharray="4 3"/>
<line x1="232.5" y1="63" x2="232.5" y2="353" stroke="#8A8A80" stroke-dasharray="4 3"/>
<line x1="282.5" y1="63" x2="282.5" y2="353" stroke="#8A8A80" stroke-dasharray="4 3"/>
<line x1="333.5" y1="63" x2="333.5" y2="353" stroke="#8A8A80" stroke-dasharray="4 3"/>
<line x1="384.5" y1="63" x2="384.5" y2="353" stroke="#8A8A80" stroke-dasharray="4 3"/>
<line x1="434.5" y1="63" x2="434.5" y2="353" stroke="#8A8A80" stroke-dasharray="4 3"/>
<rect x="47.5" y="62.5" width="419" height="291" fill="none" stroke="#000" stroke-width="1"/>
<line x1="47" y1="62" x2="47" y2="355" stroke="#000" stroke-width="2"/>
<line x1="46" y1="353" x2="467" y2="353" stroke="#000" stroke-width="2"/>
<line x1="41" y1="354.5" x2="47" y2="354.5" stroke="#000"/>
<text x="40" y="358.5" text-anchor="end" font-size="11.5">0</text>
<line x1="41" y1="337.5" x2="47" y2="337.5" stroke="#000"/>
<text x="40" y="341.5" text-anchor="end" font-size="11.5">50</text>
<line x1="41" y1="320.5" x2="47" y2="320.5" stroke="#000"/>
<text x="40" y="324.5" text-anchor="end" font-size="11.5">100</text>
<line x1="41" y1="302.5" x2="47" y2="302.5" stroke="#000"/>
<text x="40" y="306.5" text-anchor="end" font-size="11.5">150</text>
<line x1="41" y1="285.5" x2="47" y2="285.5" stroke="#000"/>
<text x="40" y="289.5" text-anchor="end" font-size="11.5">200</text>
<line x1="41" y1="268.5" x2="47" y2="268.5" stroke="#000"/>
<text x="40" y="272.5" text-anchor="end" font-size="11.5">250</text>
<line x1="41" y1="250.5" x2="47" y2="250.5" stroke="#000"/>
<text x="40" y="254.5" text-anchor="end" font-size="11.5">300</text>
<line x1="41" y1="233.5" x2="47" y2="233.5" stroke="#000"/>
<text x="40" y="237.5" text-anchor="end" font-size="11.5">350</text>
<line x1="41" y1="216.5" x2="47" y2="216.5" stroke="#000"/>
<text x="40" y="220.5" text-anchor="end" font-size="11.5">400</text>
<line x1="41" y1="199.5" x2="47" y2="199.5" stroke="#000"/>
<text x="40" y="203.5" text-anchor="end" font-size="11.5">450</text>
<line x1="41" y1="182.5" x2="47" y2="182.5" stroke="#000"/>
<text x="40" y="186.5" text-anchor="end" font-size="11.5">500</text>
<line x1="41" y1="164.5" x2="47" y2="164.5" stroke="#000"/>
<text x="40" y="168.5" text-anchor="end" font-size="11.5">550</text>
<line x1="41" y1="147.5" x2="47" y2="147.5" stroke="#000"/>
<text x="40" y="151.5" text-anchor="end" font-size="11.5">600</text>
<line x1="41" y1="130.5" x2="47" y2="130.5" stroke="#000"/>
<text x="40" y="134.5" text-anchor="end" font-size="11.5">650</text>
<line x1="41" y1="112.5" x2="47" y2="112.5" stroke="#000"/>
<text x="40" y="116.5" text-anchor="end" font-size="11.5">700</text>
<line x1="41" y1="95.5" x2="47" y2="95.5" stroke="#000"/>
<text x="40" y="99.5" text-anchor="end" font-size="11.5">750</text>
<line x1="41" y1="78.5" x2="47" y2="78.5" stroke="#000"/>
<text x="40" y="82.5" text-anchor="end" font-size="11.5">800</text>
<line x1="54.5" y1="354" x2="54.5" y2="358" stroke="#000"/>
<line x1="67.5" y1="354" x2="67.5" y2="358" stroke="#000"/>
<line x1="79.5" y1="354" x2="79.5" y2="358" stroke="#000"/>
<line x1="92.5" y1="354" x2="92.5" y2="358" stroke="#000"/>
<line x1="105.5" y1="354" x2="105.5" y2="358" stroke="#000"/>
<line x1="117.5" y1="354" x2="117.5" y2="358" stroke="#000"/>
<line x1="130.5" y1="354" x2="130.5" y2="358" stroke="#000"/>
<line x1="143.5" y1="354" x2="143.5" y2="358" stroke="#000"/>
<line x1="155.5" y1="354" x2="155.5" y2="358" stroke="#000"/>
<line x1="168.5" y1="354" x2="168.5" y2="358" stroke="#000"/>
<line x1="181.5" y1="354" x2="181.5" y2="358" stroke="#000"/>
<line x1="193.5" y1="354" x2="193.5" y2="358" stroke="#000"/>
<line x1="206.5" y1="354" x2="206.5" y2="358" stroke="#000"/>
<line x1="219.5" y1="354" x2="219.5" y2="358" stroke="#000"/>
<line x1="231.5" y1="354" x2="231.5" y2="358" stroke="#000"/>
<line x1="244.5" y1="354" x2="244.5" y2="358" stroke="#000"/>
<line x1="257.5" y1="354" x2="257.5" y2="358" stroke="#000"/>
<line x1="269.5" y1="354" x2="269.5" y2="358" stroke="#000"/>
<line x1="282.5" y1="354" x2="282.5" y2="358" stroke="#000"/>
<line x1="295.5" y1="354" x2="295.5" y2="358" stroke="#000"/>
<line x1="308.5" y1="354" x2="308.5" y2="358" stroke="#000"/>
<line x1="320.5" y1="354" x2="320.5" y2="358" stroke="#000"/>
<line x1="333.5" y1="354" x2="333.5" y2="358" stroke="#000"/>
<line x1="346.5" y1="354" x2="346.5" y2="358" stroke="#000"/>
<line x1="358.5" y1="354" x2="358.5" y2="358" stroke="#000"/>
<line x1="371.5" y1="354" x2="371.5" y2="358" stroke="#000"/>
<line x1="384.5" y1="354" x2="384.5" y2="358" stroke="#000"/>
<line x1="396.5" y1="354" x2="396.5" y2="358" stroke="#000"/>
<line x1="409.5" y1="354" x2="409.5" y2="358" stroke="#000"/>
<line x1="422.5" y1="354" x2="422.5" y2="358" stroke="#000"/>
<line x1="434.5" y1="354" x2="434.5" y2="358" stroke="#000"/>
<line x1="447.5" y1="354" x2="447.5" y2="358" stroke="#000"/>
<line x1="460.5" y1="354" x2="460.5" y2="358" stroke="#000"/>
<text x="79.5" y="371" text-anchor="middle" font-size="11.5">0</text>
<text x="130.2" y="371" text-anchor="middle" font-size="11.5">1</text>
<text x="180.9" y="371" text-anchor="middle" font-size="11.5">2</text>
<text x="231.60000000000002" y="371" text-anchor="middle" font-size="11.5">3</text>
<text x="282.3" y="371" text-anchor="middle" font-size="11.5">4</text>
<text x="333.0" y="371" text-anchor="middle" font-size="11.5">5</text>
<text x="383.70000000000005" y="371" text-anchor="middle" font-size="11.5">6</text>
<text x="434.40000000000003" y="371" text-anchor="middle" font-size="11.5">7</text>
<circle cx="83.4" cy="376.70000000000005" r="4" fill="#F00000"/>
<circle cx="135.4" cy="376.70000000000005" r="4" fill="#F00000"/>
<circle cx="191.2" cy="376.70000000000005" r="4" fill="#F00000"/>
<rect x="67.5" y="230.5" width="12" height="124" fill="#FF0000" stroke="#000"/>
<rect x="79.5" y="258.5" width="15" height="96" fill="#007800" stroke="#000"/>
<rect x="118.5" y="217.5" width="12" height="137" fill="#FF0000" stroke="#000"/>
<rect x="130.5" y="206.5" width="15" height="148" fill="#007800" stroke="#000"/>
<rect x="168.5" y="205.5" width="12" height="149" fill="#FF0000" stroke="#000"/>
<rect x="180.5" y="99.5" width="15" height="255" fill="#007800" stroke="#000"/>
<line x1="72.5" y1="210" x2="72.5" y2="230" stroke="#FFFFFF"/>
<line x1="87.5" y1="239" x2="87.5" y2="259" stroke="#FFFFFF"/>
<line x1="123.5" y1="197" x2="123.5" y2="217" stroke="#FFFFFF"/>
<line x1="137.5" y1="187" x2="137.5" y2="206" stroke="#FFFFFF"/>
<line x1="173.5" y1="185" x2="173.5" y2="204" stroke="#FFFFFF"/>
<line x1="188.5" y1="79" x2="188.5" y2="99" stroke="#FFFFFF"/>
<rect x="58.5" y="195.5" width="29" height="15" fill="#FFFF99" stroke="#000"/>
<text x="72.5" y="207" text-anchor="middle" font-size="11.5">359</text>
<rect x="72.5" y="225.5" width="29" height="14" fill="#FFFF99" stroke="#000"/>
<text x="86.5" y="236" text-anchor="middle" font-size="11.5">277</text>
<rect x="110.5" y="183.5" width="29" height="14" fill="#FFFF99" stroke="#000"/>
<text x="124.5" y="194" text-anchor="middle" font-size="11.5">397</text>
<rect x="123.5" y="173.5" width="29" height="14" fill="#FFFF99" stroke="#000"/>
<text x="137.5" y="184" text-anchor="middle" font-size="11.5">428</text>
<rect x="159.5" y="171.5" width="29" height="14" fill="#FFFF99" stroke="#000"/>
<text x="173.5" y="182" text-anchor="middle" font-size="11.5">433</text>
<rect x="180.5" y="99.5" width="15" height="255" fill="#007800" stroke="#000"/>
<rect x="173.5" y="65.5" width="29" height="14" fill="#FFFF99" stroke="#000"/>
<text x="187.5" y="76" text-anchor="middle" font-size="11.5">740</text>
<line x1="223.5" y1="335" x2="223.5" y2="353" stroke="#FFFFFF"/>
<line x1="240.5" y1="335" x2="240.5" y2="353" stroke="#FFFFFF"/>
<rect x="217.5" y="320.5" width="15" height="14" fill="#FFFF99" stroke="#000"/>
<text x="224.5" y="331" text-anchor="middle" font-size="11.5">0</text>
<rect x="232.5" y="320.5" width="16" height="14" fill="#FFFF99" stroke="#000"/>
<text x="240.0" y="331" text-anchor="middle" font-size="11.5">0</text>
<line x1="273.5" y1="335" x2="273.5" y2="353" stroke="#FFFFFF"/>
<line x1="290.5" y1="335" x2="290.5" y2="353" stroke="#FFFFFF"/>
<rect x="267.5" y="320.5" width="15" height="14" fill="#FFFF99" stroke="#000"/>
<text x="274.5" y="331" text-anchor="middle" font-size="11.5">0</text>
<rect x="282.5" y="320.5" width="16" height="14" fill="#FFFF99" stroke="#000"/>
<text x="290.0" y="331" text-anchor="middle" font-size="11.5">0</text>
<line x1="324.5" y1="335" x2="324.5" y2="353" stroke="#FFFFFF"/>
<line x1="341.5" y1="335" x2="341.5" y2="353" stroke="#FFFFFF"/>
<rect x="318.5" y="320.5" width="15" height="14" fill="#FFFF99" stroke="#000"/>
<text x="325.5" y="331" text-anchor="middle" font-size="11.5">0</text>
<rect x="333.5" y="320.5" width="16" height="14" fill="#FFFF99" stroke="#000"/>
<text x="341.0" y="331" text-anchor="middle" font-size="11.5">0</text>
<line x1="375.5" y1="335" x2="375.5" y2="353" stroke="#FFFFFF"/>
<line x1="392.5" y1="335" x2="392.5" y2="353" stroke="#FFFFFF"/>
<rect x="369.5" y="320.5" width="15" height="14" fill="#FFFF99" stroke="#000"/>
<text x="376.5" y="331" text-anchor="middle" font-size="11.5">0</text>
<rect x="384.5" y="320.5" width="16" height="14" fill="#FFFF99" stroke="#000"/>
<text x="392.0" y="331" text-anchor="middle" font-size="11.5">0</text>
<line x1="425.5" y1="335" x2="425.5" y2="353" stroke="#FFFFFF"/>
<line x1="442.5" y1="335" x2="442.5" y2="353" stroke="#FFFFFF"/>
<rect x="419.5" y="320.5" width="15" height="14" fill="#FFFF99" stroke="#000"/>
<text x="426.5" y="331" text-anchor="middle" font-size="11.5">0</text>
<rect x="434.5" y="320.5" width="16" height="14" fill="#FFFF99" stroke="#000"/>
<text x="442.0" y="331" text-anchor="middle" font-size="11.5">0</text>
<rect x="485" y="68" width="59" height="31" fill="#000"/>
<rect x="481.5" y="64.5" width="58" height="31" fill="#fff" stroke="#000"/>
<rect x="486.5" y="68.5" width="5" height="10" fill="#FF0000" stroke="#000"/>
<rect x="486.5" y="82.5" width="5" height="10" fill="#007800" stroke="#000"/>
<text x="495" y="77" font-size="11">Cyl</text>
<text x="495" y="91" font-size="11">Sec Rec</text>
<text x="242" y="54" text-anchor="middle" font-size="11" fill="#1010A0">Head Defect Statistic</text></svg>
<div class="a" style="left:40px;top:724px;width:557px;height:1px;background:#ACA899"></div>
<div class="a" style="left:40px;top:725px;width:557px;height:1px;background:#fff"></div>
<div class="btn" style="left:88px;top:730px;width:97px;height:25px;font-size:11.5px;line-height:23px">Log Zone Defect</div>
<div class="chk" style="left:288px;top:736px"></div>
<div class="t" style="left:305px;top:736px;font-size:11.5px">Show Sect Info</div>
<div class="btn" style="left:520px;top:730px;width:60px;height:25px;border:1px solid #000;box-shadow:inset 1px 1px 0 #fff,inset -1px -1px 0 #716F64"></div>
<div class="a" style="left:524px;top:734px;width:52px;height:17px;border:1px dotted #000"></div>
<svg class="a" style="left:524px;top:734px" width="16" height="16"><path d="M3 3 L12 13 M12 3 L3 13" stroke="#D01010" stroke-width="3"/></svg>
<div class="t" style="left:543px;top:737px;font-size:11.5px">Cancel</div>

<!-- bottom -->
<div class="a" style="left:4px;top:803px;width:1147px;height:3px;background:#8E8C80"></div>
<div class="a" style="left:7px;top:806px;width:39px;height:19px;border-left:1px solid #fff;border-bottom:2px solid #8E8C80;border-right:1px solid #ACA899;background:#ECE9D8"></div>
<div class="t" style="left:11px;top:810px;font-size:11px">Ports</div>
<div class="a" style="left:45px;top:806px;width:46px;height:21px;border-left:1px solid #fff;border-bottom:2px solid #8E8C80;border-right:2px solid #8E8C80;background:#ECE9D8"></div>
<div class="t" style="left:53px;top:812px;font-size:11px">WD</div>
<div class="a" style="left:91px;top:826px;width:1185px;height:2px;background:#fff"></div>
<div class="t" style="left:367px;top:830px;font-size:11px;letter-spacing:-0.2px">Intel(R) Core(TM)2 Duo CPU&nbsp;&nbsp;&nbsp;&nbsp;&nbsp; E7200&nbsp; @ 2.53GHz - Windows NT 5.1 (Build 2600: Service Pack 3) -&nbsp; 2,070,564 KB</div>
<div class="a" style="left:4px;top:842px;width:1272px;height:1px;background:#ACA899"></div>
<div class="a" style="left:4px;top:843px;width:1272px;height:1px;background:#fff"></div>
<div class="a" style="left:5px;top:851px;width:301px;height:110px;border:1px solid #B0AE9E;box-shadow:inset 1px 1px 0 #fff,1px 1px 0 #fff"></div><div class="t" style="left:13px;top:847px;padding:0 1px;background:#ECE9D8;font-size:11px">General information (Folder Name!)</div>
<div class="t" style="left:14px;top:877px;font-size:12px;font-weight:bold">Vendor</div>
<div class="t" style="left:91px;top:877px;font-size:12px;font-weight:bold;color:#1010C0">Western Digital</div>
<div class="t" style="left:14px;top:893px;font-size:12px;font-weight:bold">Code Name:</div>
<div class="t" style="left:91px;top:893px;font-size:12px;font-weight:bold;color:#1010C0">ATLANTIS</div>
<div class="t" style="left:14px;top:909px;font-size:12px;font-weight:bold">Model:</div>
<div class="t" style="left:91px;top:909px;font-size:12px;font-weight:bold;color:#1010C0">WDCWD5000AAKS-00A7B2</div>
<div class="t" style="left:14px;top:925px;font-size:12px;font-weight:bold">Firmware:</div>
<div class="t" style="left:91px;top:925px;font-size:12px;font-weight:bold;color:#1010C0">1.03B01</div>
<div class="t" style="left:14px;top:941px;font-size:12px;font-weight:bold">Serial:</div>
<div class="t" style="left:91px;top:941px;font-size:12px;font-weight:bold;color:#1010C0">WD-WCASZ0847841</div>
<div class="a" style="left:270px;top:909px;width:9px;height:9px;border-radius:50%;background:#F00000"></div>
<div class="btn" style="left:254px;top:932px;width:41px;height:25px;font-size:11.5px;line-height:23px">Change</div>
<div class="a" style="left:312px;top:851px;width:790px;height:110px;border:1px solid #B0AE9E;box-shadow:inset 1px 1px 0 #fff,1px 1px 0 #fff"></div><div class="t" style="left:318px;top:847px;padding:0 1px;background:#ECE9D8;font-size:11px">Info</div>
<div class="a" style="left:313px;top:861px;width:787px;height:97px;background:#fff;border-top:2px solid #716F64;border-left:2px solid #716F64;border-right:1px solid #fff;border-bottom:1px solid #fff"></div>
<div class="t" style="left:316px;top:865px;font-size:11px;color:#000">Identify Disk: Successful!</div>
<div class="t" style="left:316px;top:878px;font-size:11px;color:#1010A0">Head Map Read - OK</div>
<div class="t" style="left:316px;top:891px;font-size:11px;color:#1010A0">Drive Table Read - OK</div>
<div class="t" style="left:316px;top:904px;font-size:11px;color:#1010A0">Zone Table Read - OK</div>
<div class="t" style="left:316px;top:917px;font-size:11px;color:#1010A0">Zone Table PSN - OK</div>
<div class="a" style="left:315px;top:942px;width:768px;height:15px;background:linear-gradient(#F3F1EC,#FEFEFB)"></div>
<div class="a" style="left:316px;top:942px;width:15px;height:15px;background:#F0EFEA;border:1px solid #E8E6DD"></div>
<svg class="a" style="left:316px;top:942px" width="15" height="15"><path d="M9 4 L5.5 7.5 L9 11" stroke="#C9C7BA" stroke-width="2" fill="none"/></svg>
<div class="a" style="left:1083px;top:942px;width:16px;height:15px;background:#ECE9D8"></div>
<div class="a" style="left:1067px;top:942px;width:15px;height:15px;background:#F0EFEA;border:1px solid #E8E6DD"></div>
<svg class="a" style="left:1067px;top:942px" width="15" height="15"><path d="M6 4 L9.5 7.5 L6 11" stroke="#C9C7BA" stroke-width="2" fill="none"/></svg>
<div class="a" style="left:1083px;top:863px;width:16px;height:79px;background:linear-gradient(90deg,#F3F1EC,#FEFEFB)"></div>
<div class="a" style="left:1084px;top:863px;width:15px;height:17px;border:1px solid #B8C8F0;border-radius:2px;background:linear-gradient(135deg,#D8E4FC,#B8CCF8)"></div>
<div class="a" style="left:1084px;top:900px;width:15px;height:24px;border:1px solid #B8C8F0;border-radius:2px;background:linear-gradient(135deg,#D8E4FC,#B8CCF8)"></div>
<div class="a" style="left:1084px;top:924px;width:15px;height:17px;border:1px solid #B8C8F0;border-radius:2px;background:linear-gradient(135deg,#D8E4FC,#B8CCF8)"></div>
<svg class="a" style="left:1084px;top:863px" width="15" height="17"><path d="M4 10 L7.5 6.5 L11 10" stroke="#4D6185" stroke-width="2" fill="none"/></svg>
<svg class="a" style="left:1084px;top:924px" width="15" height="17"><path d="M4 7 L7.5 10.5 L11 7" stroke="#4D6185" stroke-width="2" fill="none"/></svg>
<div class="a" style="left:1089px;top:908px;width:6px;height:7px;border-top:1px solid #8CA8E8;border-bottom:1px solid #8CA8E8"></div>
<div class="a" style="left:1107px;top:851px;width:168px;height:110px;border:1px solid #B0AE9E;box-shadow:inset 1px 1px 0 #fff,1px 1px 0 #fff"></div><div class="t" style="left:1113px;top:847px;padding:0 1px;background:#ECE9D8;font-size:11px">Status</div>
<div class="a" style="left:4px;top:962px;width:1272px;height:1px;background:#fff"></div>
<div class="a" style="left:8px;top:967px;width:39px;height:20px;background:#00F0F8;color:#D8D8D0;font-weight:bold;font-size:13px;text-align:center;line-height:20px">BUF</div>
<div class="a" style="left:51px;top:967px;width:43px;height:20px;border:1px solid;border-color:#ACA899 #fff #fff #ACA899;color:#ACA899;font-weight:bold;font-size:13px;text-align:center;line-height:18px">PWD</div>
<div class="a" style="left:99px;top:967px;width:59px;height:20px;background:#00F0F8;color:#D8D8D0;font-weight:bold;font-size:13px;text-align:center;line-height:20px">SMART</div>
<div class="a" style="left:536px;top:963px;width:1px;height:27px;background:#ACA899"></div><div class="a" style="left:537px;top:963px;width:1px;height:27px;background:#fff"></div>
<div class="a" style="left:853px;top:963px;width:1px;height:27px;background:#ACA899"></div><div class="a" style="left:854px;top:963px;width:1px;height:27px;background:#fff"></div>
<div class="a" style="left:541px;top:967px;width:47px;height:20px;border:1px solid;border-color:#ACA899 #fff #fff #ACA899;color:#ACA899;font-weight:bold;font-size:13px;text-align:center;line-height:18px">BSY</div>
<div class="a" style="left:593px;top:967px;width:47px;height:20px;background:#10E010;color:#D8D8D0;font-weight:bold;font-size:13px;text-align:center;line-height:20px">DRDY</div>
<div class="a" style="left:645px;top:967px;width:47px;height:20px;border:1px solid;border-color:#ACA899 #fff #fff #ACA899;color:#ACA899;font-weight:bold;font-size:13px;text-align:center;line-height:18px">DF/SE</div>
<div class="a" style="left:697px;top:967px;width:47px;height:20px;background:#10E010;color:#D8D8D0;font-weight:bold;font-size:13px;text-align:center;line-height:20px">DSC</div>
<div class="a" style="left:749px;top:967px;width:47px;height:20px;border:1px solid;border-color:#ACA899 #fff #fff #ACA899;color:#ACA899;font-weight:bold;font-size:13px;text-align:center;line-height:18px">DRQ</div>
<div class="a" style="left:801px;top:967px;width:47px;height:20px;border:1px solid;border-color:#ACA899 #fff #fff #ACA899;color:#ACA899;font-weight:bold;font-size:13px;text-align:center;line-height:18px">ERR</div>
<div class="a" style="left:859px;top:967px;width:47px;height:20px;border:1px solid;border-color:#ACA899 #fff #fff #ACA899;color:#ACA899;font-weight:bold;font-size:13px;text-align:center;line-height:18px">ICRC</div>
<div class="a" style="left:911px;top:967px;width:47px;height:20px;border:1px solid;border-color:#ACA899 #fff #fff #ACA899;color:#ACA899;font-weight:bold;font-size:13px;text-align:center;line-height:18px">UNC</div>
<div class="a" style="left:963px;top:967px;width:47px;height:20px;border:1px solid;border-color:#ACA899 #fff #fff #ACA899;color:#ACA899;font-weight:bold;font-size:13px;text-align:center;line-height:18px">MC</div>
<div class="a" style="left:1015px;top:967px;width:47px;height:20px;border:1px solid;border-color:#ACA899 #fff #fff #ACA899;color:#ACA899;font-weight:bold;font-size:13px;text-align:center;line-height:18px">IDNF</div>
<div class="a" style="left:1067px;top:967px;width:47px;height:20px;border:1px solid;border-color:#ACA899 #fff #fff #ACA899;color:#ACA899;font-weight:bold;font-size:13px;text-align:center;line-height:18px">MCR</div>
<div class="a" style="left:1119px;top:967px;width:47px;height:20px;border:1px solid;border-color:#ACA899 #fff #fff #ACA899;color:#ACA899;font-weight:bold;font-size:13px;text-align:center;line-height:18px">ABRT</div>
<div class="a" style="left:1171px;top:967px;width:47px;height:20px;border:1px solid;border-color:#ACA899 #fff #fff #ACA899;color:#ACA899;font-weight:bold;font-size:13px;text-align:center;line-height:18px">NM</div>
<div class="a" style="left:1223px;top:967px;width:47px;height:20px;border:1px solid;border-color:#ACA899 #fff #fff #ACA899;color:#ACA899;font-weight:bold;font-size:13px;text-align:center;line-height:18px">AMNF</div>
<!-- taskbar -->
<div class="a" style="left:0;top:994px;width:1280px;height:30px;background:linear-gradient(#3168D5 0,#4993E6 3px,#2157D7 8px,#2663E0 24px,#1941A5 30px)"></div>

<div class="a" style="left:0;top:994px;width:96px;height:30px;border-radius:0 10px 10px 0;background:linear-gradient(#3A8A3A 0,#70B870 2px,#4AA84A 5px,#3C9C3C 12px,#34943A 22px,#2C862C 27px,#246E24 30px);box-shadow:inset -3px 0 4px rgba(0,60,0,0.5)"></div>
<svg class="a" style="left:10px;top:1000px" width="20" height="18"><path d="M3 2 Q6 0.5 10 2 L9 8 Q5.5 6.5 2 8Z" fill="#F05A20"/><path d="M11 2.5 Q14.5 3.5 18 2 L17 8.5 Q13.5 10 10 8.5Z" fill="#70C030"/><path d="M2 9 Q5.5 7.5 9 9 L8 15 Q4.5 13.5 1 15Z" fill="#4080F0"/><path d="M10 9.5 Q13.5 11 17 9.5 L16 16 Q12.5 17 9 15.5Z" fill="#F8C820"/></svg>
<div class="t" style="left:33px;top:1000px;font-size:17px;font-weight:bold;font-style:italic;color:#fff;text-shadow:1px 1px 1px #1A4A1A">start</div>
<div class="a" style="left:107px;top:997px;width:158px;height:25px;border-radius:3px;background:linear-gradient(#5A9AF8,#3C80F0 40%,#3474E8);box-shadow:inset 1px 1px 0 #7AB0FF"></div>
<div class="a" style="left:267px;top:997px;width:158px;height:25px;border-radius:3px;background:linear-gradient(#5A9AF8,#3C80F0 40%,#3474E8);box-shadow:inset 1px 1px 0 #7AB0FF"></div>
<div class="a" style="left:427px;top:997px;width:158px;height:25px;border-radius:3px;background:linear-gradient(#5A9AF8,#3C80F0 40%,#3474E8);box-shadow:inset 1px 1px 0 #7AB0FF"></div>
<div class="a" style="left:587px;top:997px;width:158px;height:25px;border-radius:3px;background:#1E50C8;box-shadow:inset 1px 1px 1px #103090"></div>
<svg class="a" style="left:116px;top:1002px" width="16" height="14"><path d="M1 3 L6 3 L7 1 L13 1 L13 13 L1 13Z" fill="#E8C860" stroke="#8A6A20"/><path d="M2 6 L15 6 L13 13 L1 13Z" fill="#F8E088" stroke="#8A6A20"/></svg>
<div class="t" style="left:136px;top:1004px;font-size:11px;color:#fff">+++</div>
<svg class="a" style="left:276px;top:1002px" width="16" height="14"><path d="M1 3 L6 3 L7 1 L13 1 L13 13 L1 13Z" fill="#E8C860" stroke="#8A6A20"/><path d="M2 6 L15 6 L13 13 L1 13Z" fill="#F8E088" stroke="#8A6A20"/></svg>
<div class="t" style="left:295px;top:1004px;font-size:11px;color:#fff">Desktop</div>
<div class="a" style="left:436px;top:1001px;width:16px;height:16px;background:#fff"></div>
<div class="t" style="left:436px;top:1006px;font-size:6.5px;font-weight:bold;color:#000;letter-spacing:-0.4px">SeDiv</div>
<div class="t" style="left:456px;top:1004px;font-size:11px;color:#fff">SeDiv</div>
<div class="a" style="left:597px;top:1002px;width:16px;height:16px;background:#fff"></div>
<div class="t" style="left:597px;top:1007px;font-size:6.5px;font-weight:bold;color:#000;letter-spacing:-0.4px">SeDiv</div>
<div class="t" style="left:616px;top:1005px;font-size:11px;color:#fff">SeDiv</div>
<div class="a" style="left:1082px;top:994px;width:198px;height:30px;background:linear-gradient(#1C8EE8 0,#1AA0F0 3px,#1090E8 20px,#0C80DC 30px);border-left:1px solid #0A4AA0;box-shadow:inset 1px 0 0 #40A8F0"></div>
<div class="a" style="left:1092px;top:1001px;width:16px;height:16px;background:#80F080"></div>
<div class="t" style="left:1092px;top:1003px;font-size:12px;font-weight:bold;color:#000">37</div>
<svg class="a" style="left:1110px;top:1001px" width="16" height="17"><path d="M1.5 2.5 L8 0.8 L14.5 2.5 L14.5 8 Q14 13.5 8 16.2 Q2 13.5 1.5 8Z" fill="#F4F4F4" stroke="#B02828" stroke-width="0.8"/><path d="M8 0.8 L14.5 2.5 L14.5 8 L8 8Z" fill="#D83030"/><path d="M1.5 8 L8 8 L8 16.2 Q2 13.5 1.5 8Z" fill="#D83030"/></svg>
<svg class="a" style="left:1128px;top:1001px" width="17" height="17"><circle cx="7.5" cy="7.5" r="6.5" fill="#9AA2AE" stroke="#3E4652" stroke-width="1.2"/><circle cx="7.5" cy="7.5" r="3.4" fill="#5A6878"/><circle cx="6.5" cy="6.5" r="1.2" fill="#D8E0F0"/><path d="M11 15 L16 11" stroke="#D0D8F0" stroke-width="1.5"/></svg>
<div class="a" style="left:1146px;top:1001px;width:16px;height:16px;border-radius:2px;background:#D2141E"></div>
<svg class="a" style="left:1146px;top:1001px" width="16" height="16"><path d="M3.5 13 C 5 6, 8 3, 10 3.5 C 12 4, 11 8, 8.5 9.5 C 10.5 10.5, 12 12, 13.5 13" stroke="#fff" stroke-width="2" fill="none" stroke-linecap="round"/></svg>
<svg class="a" style="left:1166px;top:1000px" width="13" height="18"><path d="M6.5 1 Q10 5 9 12 L4 12 Q3 5 6.5 1Z" fill="#F8F8F8" stroke="#111" stroke-width="1"/><path d="M4 9 L1.5 13 L4.5 12.5Z M9 9 L11.5 13 L8.5 12.5Z" fill="#111"/><path d="M5 13 L8 13 L6.5 17Z" fill="#F0A030"/><path d="M6 4 L7 4 L7 11 L6 11Z" fill="#E06060"/></svg>
<svg class="a" style="left:1181px;top:1000px" width="18" height="19"><path d="M9 3 Q4 2 4 5 Q4 7.5 8 8 Q11 8.5 10.5 11 Q10 13 5 12" stroke="#D01818" stroke-width="2.4" fill="none"/><path d="M7 1 L7 14" stroke="#D01818" stroke-width="1.2"/><path d="M12 5 L16 8 L12 9Z" fill="#1030E0"/><path d="M3 12 L6 16 L2 15Z" fill="#1030E0"/><ellipse cx="12" cy="15.5" rx="5.5" ry="3" fill="#20D040"/><text x="12" y="18" font-size="6.5" text-anchor="middle" font-weight="bold" font-family="Liberation Sans" fill="#002000">28</text></svg>
<svg class="a" style="left:1199px;top:1001px" width="18" height="17"><circle cx="10" cy="7.5" r="6.8" fill="#3A8AD8"/><path d="M5 3 Q9 5 8 9 Q11 12 15 10 Q16 5 12 1.5 Q8 1 5 3Z" fill="#58B838"/><path d="M1 9 Q6 8 10 11 L12 9 L12 16 L5 16 L8 13 Q5 11 1 11Z" fill="#48A028" stroke="#204010" stroke-width="0.6"/></svg>
<div class="t" style="left:1223px;top:1003px;font-size:11px;color:#fff">11:54 &#1589;</div>

</body></html>
